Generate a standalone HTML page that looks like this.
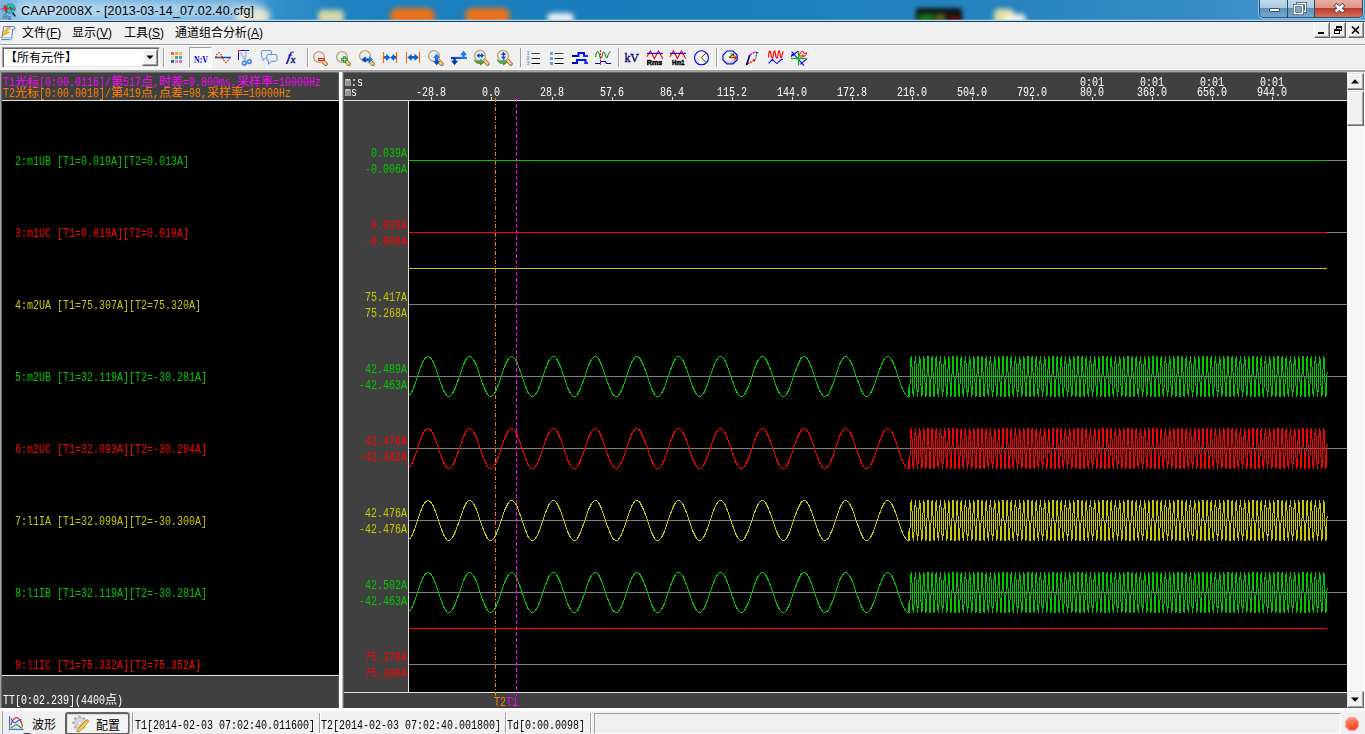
<!DOCTYPE html>
<html lang="zh-CN"><head><meta charset="utf-8"><title>CAAP2008X - [2013-03-14_07.02.40.cfg]</title>
<style>
html,body{margin:0;padding:0;}
body{width:1365px;height:734px;overflow:hidden;position:relative;background:#f0f0f0;font-family:"Liberation Sans","Noto Sans CJK SC",sans-serif;font-size:12px;}
div,span,svg{box-sizing:border-box;}
.a{position:absolute;}
.t{position:absolute;white-space:pre;font:12px/12px "Liberation Mono","Noto Sans CJK SC",monospace;height:12px;}
.t b{display:inline-block;font-weight:normal;transform:scaleX(.83334);transform-origin:0 50%;white-space:pre;}
.t i{font-style:normal;display:inline-block;width:auto;font-size:12px;}
.ui{position:absolute;white-space:pre;font:12px/16px "Liberation Sans","Noto Sans CJK SC",sans-serif;color:#000;}

</style></head>
<body>
<div class="a" id="titlebar" style="left:0;top:0;width:1365px;height:22px;overflow:hidden;background:linear-gradient(90deg,#7cb8e2 0px,#5ba6d9 120px,#3a92cc 260px,#1f82c0 340px,#187dba 600px,#1f81bd 850px,#2883bf 1020px,#378cc6 1200px,#4a98d0 1365px);">
<div class="a" style="left:14px;top:1px;width:250px;height:19px;background:#ffffff;border-radius:10px;filter:blur(6px);opacity:0.55"></div>
<div class="a" style="left:236px;top:9px;width:34px;height:16px;background:#f4efd6;border-radius:8px;filter:blur(3px);opacity:0.9"></div>
<div class="a" style="left:318px;top:10px;width:26px;height:14px;background:#e9e2a4;border-radius:5px;filter:blur(2.5px);opacity:0.9"></div>
<div class="a" style="left:390px;top:8px;width:45px;height:16px;background:#e8721c;border-radius:8px;filter:blur(2.5px);opacity:1"></div>
<div class="a" style="left:465px;top:8px;width:45px;height:16px;background:#e8721c;border-radius:8px;filter:blur(2.5px);opacity:1"></div>
<div class="a" style="left:547px;top:13px;width:27px;height:10px;background:#f4f4f4;border-radius:5px;filter:blur(2.5px);opacity:0.95"></div>
<div class="a" style="left:916px;top:8px;width:46px;height:16px;background:#0a1210;border-radius:3px;filter:blur(2.2px);opacity:0.97"></div>
<div class="a" style="left:918px;top:14px;width:16px;height:9px;background:#1c8a18;border-radius:3px;filter:blur(2.5px);opacity:0.85"></div>
<div class="a" style="left:934px;top:14px;width:12px;height:9px;background:#6a7414;border-radius:3px;filter:blur(2.5px);opacity:0.8"></div>
<div class="a" style="left:948px;top:15px;width:13px;height:8px;background:#6a0c0c;border-radius:3px;filter:blur(2.5px);opacity:0.85"></div>
<div class="a" style="left:994px;top:9px;width:20px;height:16px;background:#ece6a0;border-radius:5px;filter:blur(2.5px);opacity:0.95"></div>
<div class="a" style="left:1004px;top:14px;width:22px;height:10px;background:#f4f2e8;border-radius:5px;filter:blur(2.5px);opacity:0.95"></div>
<div class="a" style="left:0;top:19px;width:1365px;height:1px;background:rgba(190,225,245,.25)"></div>
<div class="a" style="left:0;top:20px;width:1365px;height:1px;background:#b4daf0"></div>
<div class="a" style="left:0;top:21px;width:1365px;height:1px;background:#1d405e"></div>
</div>
<div class="a" id="title" style="left:21px;top:3px;height:16px;font:12.5px/16px 'Liberation Sans',sans-serif;color:#000;white-space:pre;letter-spacing:0.14px">CAAP2008X - [2013-03-14_07.02.40.cfg]</div>
<div class="a" style="left:1259px;top:-1px;width:104px;height:19px;border:1px solid #2a4a66;border-top:none;border-radius:0 0 5px 5px;overflow:hidden;box-shadow:0 0 0 1px rgba(255,255,255,.45)">
<div class="a" style="left:0;top:0;width:28px;height:18px;background:linear-gradient(#c4dcee 0,#a8cbe4 48%,#5c93ba 52%,#76a8cb 100%);border-right:1px solid #2a4a66"></div>
<div class="a" style="left:28px;top:0;width:27px;height:18px;background:linear-gradient(#c4dcee 0,#a8cbe4 48%,#5c93ba 52%,#76a8cb 100%);border-right:1px solid #2a4a66"></div>
<div class="a" style="left:55px;top:0;width:48px;height:18px;background:linear-gradient(#e8b0a6 0,#dc9486 48%,#bf3a26 52%,#d0705c 100%)"></div>
</div>
<svg class="a" style="left:1259px;top:0" width="104" height="19" viewBox="0 0 104 19"><rect x="10.5" y="8.5" width="10" height="3" fill="#fff" stroke="#3d4f63" stroke-width="1" rx="0.5"/><rect x="38.5" y="3.5" width="8" height="8" fill="none" stroke="#3d4f63" stroke-width="3"/><rect x="38.5" y="3.5" width="8" height="8" fill="none" stroke="#fff" stroke-width="1.4"/><rect x="35.5" y="5.5" width="8" height="8" fill="#7aa8cb" stroke="#3d4f63" stroke-width="3"/><rect x="35.5" y="5.5" width="8" height="8" fill="none" stroke="#fff" stroke-width="1.6"/><path d="M76 4.4 L85 12 M85 4.4 L76 12" stroke="#4a4a5a" stroke-width="4.2" stroke-linecap="butt"/><path d="M76.7 5 L84.3 11.4 M84.3 5 L76.7 11.4" stroke="#fff" stroke-width="2.6" stroke-linecap="butt"/></svg>
<div class="a" style="left:0;top:22px;width:1365px;height:22px;background:#f0f0f0"></div>
<div class="ui mn" style="left:22px;top:25px">文件(<u>F</u>)</div>
<div class="ui mn" style="left:72px;top:25px">显示(<u>V</u>)</div>
<div class="ui mn" style="left:124px;top:25px">工具(<u>S</u>)</div>
<div class="ui mn" style="left:175px;top:25px">通道组合分析(<u>A</u>)</div>
<div class="a" style="left:1314px;top:22px;width:16px;height:16px;background:#f0f0f0;border:1px solid;border-color:#fff #696969 #696969 #fff;box-shadow:inset -1px -1px 0 #a0a0a0"></div>
<div class="a" style="left:1330px;top:22px;width:16px;height:16px;background:#f0f0f0;border:1px solid;border-color:#fff #696969 #696969 #fff;box-shadow:inset -1px -1px 0 #a0a0a0"></div>
<div class="a" style="left:1348px;top:22px;width:16px;height:16px;background:#f0f0f0;border:1px solid;border-color:#fff #696969 #696969 #fff;box-shadow:inset -1px -1px 0 #a0a0a0"></div>
<svg class="a" style="left:1314px;top:23px" width="50" height="14" viewBox="0 0 50 14" shape-rendering="crispEdges"><rect x="4" y="9" width="6" height="2" fill="#000"/><rect x="22.5" y="3.5" width="5" height="4" fill="none" stroke="#000"/><rect x="22" y="3" width="6" height="2" fill="#000"/><rect x="20.5" y="6.5" width="5" height="4" fill="#f0f0f0" stroke="#000"/><rect x="20" y="6" width="6" height="2" fill="#000"/><path d="M38 3.5 L45 10.5 M45 3.5 L38 10.5" stroke="#000" stroke-width="1.6" shape-rendering="auto"/></svg>
<div class="a" style="left:0;top:44px;width:1365px;height:1px;background:#a0a0a0"></div>
<div class="a" style="left:0;top:45px;width:1365px;height:1px;background:#ffffff"></div>
<div class="a" style="left:2px;top:47px;width:158px;height:21px;background:#fff;border:1px solid;border-color:#a0a0a0 #fff #fff #a0a0a0;box-shadow:inset 1px 1px 0 #696969, inset -1px -1px 0 #e3e3e3"></div>
<div class="ui" style="left:5px;top:50px;font-family:'Liberation Sans','Noto Sans CJK SC',sans-serif;">【所有元件】</div>
<div class="a" style="left:142px;top:49px;width:16px;height:17px;background:#f0f0f0;border:1px solid;border-color:#fff #696969 #696969 #fff;box-shadow:inset -1px -1px 0 #a0a0a0, inset 1px 1px 0 #f8f8f8"></div>
<svg class="a" style="left:146px;top:55px" width="8" height="5" viewBox="0 0 8 5"><path d="M0.5 0.5 L7.5 0.5 L4 4.2 Z" fill="#000"/></svg>
<div class="a" style="left:163px;top:48px;width:1px;height:19px;background:#a0a0a0"></div>
<div class="a" style="left:164px;top:48px;width:1px;height:19px;background:#fff"></div>
<div class="a" style="left:307px;top:48px;width:1px;height:19px;background:#a0a0a0"></div>
<div class="a" style="left:308px;top:48px;width:1px;height:19px;background:#fff"></div>
<div class="a" style="left:520px;top:48px;width:1px;height:19px;background:#a0a0a0"></div>
<div class="a" style="left:521px;top:48px;width:1px;height:19px;background:#fff"></div>
<div class="a" style="left:618px;top:48px;width:1px;height:19px;background:#a0a0a0"></div>
<div class="a" style="left:619px;top:48px;width:1px;height:19px;background:#fff"></div>
<div class="a" style="left:716px;top:48px;width:1px;height:19px;background:#a0a0a0"></div>
<div class="a" style="left:717px;top:48px;width:1px;height:19px;background:#fff"></div>
<div class="a" style="left:189px;top:47px;width:23px;height:21px;background:#f8f8f8;border:1px solid;border-color:#a0a0a0 #fff #fff #a0a0a0"></div>
<div class="a" style="left:0;top:69px;width:1365px;height:1px;background:#fbfbfb"></div>
<svg class="a" style="left:0;top:0" width="1365" height="72" viewBox="0 0 1365 72" fill="none"><defs><linearGradient id="gb" x1="0" y1="0" x2="1" y2="0"><stop offset="0" stop-color="#0038b0"/><stop offset="1" stop-color="#2a8cf4"/></linearGradient><linearGradient id="gbv" x1="0" y1="0" x2="0" y2="1"><stop offset="0" stop-color="#2a8cf4"/><stop offset="1" stop-color="#0038b0"/></linearGradient><linearGradient id="gg" x1="0" y1="0" x2="0" y2="1"><stop offset="0" stop-color="#8cc878"/><stop offset="1" stop-color="#2c7c2c"/></linearGradient><radialGradient id="sph" cx="0.35" cy="0.3" r="0.8"><stop offset="0" stop-color="#ffffff"/><stop offset="0.6" stop-color="#e8e8e8"/><stop offset="1" stop-color="#909090"/></radialGradient></defs><rect x="171" y="52" width="3" height="3" fill="#f85c5c"/><rect x="175" y="52" width="3" height="3" fill="#fb9c5c"/><rect x="179" y="52" width="3" height="3" fill="#f0c444"/><rect x="171" y="56" width="3" height="3" fill="#c8e8a4"/><rect x="175" y="56" width="3" height="3" fill="#34b854"/><rect x="179" y="56" width="3" height="3" fill="#4ca4e8"/><rect x="171" y="60" width="3" height="3" fill="#4464a4"/><rect x="175" y="60" width="3" height="3" fill="#d094d8"/><rect x="179" y="60" width="3" height="3" fill="#f864a8"/><text x="201" y="63" font-family="Liberation Serif,serif" font-weight="bold" font-size="10.6" fill="#0000e8" text-anchor="middle" textLength="14" lengthAdjust="spacingAndGlyphs">N:V</text><path d="M215 57.5H231" stroke="#1464c0" stroke-width="1.6"/><circle cx="216" cy="56.5" r="0.85" fill="#e83410"/><circle cx="216.9" cy="54.5" r="0.85" fill="#e83410"/><circle cx="219" cy="52.6" r="0.85" fill="#e83410"/><circle cx="221.1" cy="54.5" r="0.85" fill="#e83410"/><circle cx="221.9" cy="56.5" r="0.85" fill="#e83410"/><circle cx="222.9" cy="58.5" r="0.85" fill="#e83410"/><circle cx="224" cy="60.5" r="0.85" fill="#e83410"/><circle cx="226" cy="62.3" r="0.85" fill="#e83410"/><circle cx="228" cy="60.5" r="0.85" fill="#e83410"/><circle cx="229" cy="58.5" r="0.85" fill="#e83410"/><path d="M238.5 53V60" stroke="#0000ff" stroke-width="1"/><path d="M241 50.5H249" stroke="#0000ff"/><path d="M238.5 53V50.5H241" stroke="#ff0000"/><path d="M240.3 52 L245.8 61.5 M246.2 50.5 L245.2 61.5" stroke="#9cc0e0" stroke-width="1.6"/><circle cx="244.3" cy="63.2" r="1.9" stroke="#3c8cd8" stroke-width="1.5" fill="#cfe4f6"/><circle cx="249.3" cy="61.6" r="1.9" stroke="#3c8cd8" stroke-width="1.5" fill="#cfe4f6"/><path d="M263 50.5h7a1.6 1.6 0 0 1 1.6 1.6v4.4a1.6 1.6 0 0 1 -1.6 1.6h-4.6l-2.4 2.6v-2.6a1.6 1.6 0 0 1 -1.6 -1.6v-4.4a1.6 1.6 0 0 1 1.6 -1.6z" fill="#e6eef8" stroke="#6c9ccc" stroke-width="1"/><path d="M268.4 54.5h7a1.6 1.6 0 0 1 1.6 1.6v3.6a1.6 1.6 0 0 1 -1.6 1.6h-4.2l-2.7 3.2v-3.2a1.6 1.6 0 0 1 -1.6 -1.6v-3.6a1.6 1.6 0 0 1 1.5 -1.6z" fill="#e6eef8" stroke="#5c90c4" stroke-width="1"/><text x="0" y="0" transform="translate(286.2 61.4) skewX(-12)" font-family="Liberation Serif,serif" font-style="italic" font-weight="bold" font-size="13.5" fill="#1018b0">f</text><text x="290.8" y="62.6" font-family="Liberation Serif,serif" font-style="italic" font-weight="bold" font-size="9.5" fill="#101890" stroke="#101890" stroke-width="0.3">x</text><path d="M323.6 61.8 L325.8 64" stroke="#a86428" stroke-width="4" stroke-linecap="round"/><path d="M323.4 61.6 L325.6 63.8" stroke="#ecd094" stroke-width="2.4" stroke-linecap="round"/><circle cx="319" cy="57" r="5.4" fill="#e4ecf4" stroke="#c8a060" stroke-width="1.3"/><rect x="318" y="58" width="7" height="3" fill="#e82434"/><rect x="319.3" y="59" width="4.4" height="1" fill="#ffc8c8"/><path d="M346.6 61.8 L348.8 64" stroke="#a86428" stroke-width="4" stroke-linecap="round"/><path d="M346.4 61.6 L348.6 63.8" stroke="#ecd094" stroke-width="2.4" stroke-linecap="round"/><circle cx="342" cy="57" r="5.4" fill="#e4ecf4" stroke="#c8a060" stroke-width="1.3"/><path d="M344.5 56.2V62.8M341.2 59.5H347.8" stroke="#308c30" stroke-width="3"/><path d="M344.5 57.2V61.8M342.2 59.5H346.8" stroke="#a4dc94" stroke-width="1"/><path d="M369.6 60.8 L372.8 64" stroke="#a86428" stroke-width="4" stroke-linecap="round"/><path d="M369.4 60.6 L372.6 63.8" stroke="#ecd094" stroke-width="2.4" stroke-linecap="round"/><circle cx="365" cy="56" r="5.4" fill="#e4ecf4" stroke="#c8a060" stroke-width="1.3"/><path d="M361.6 59.6 L365.8 56.2 L365.8 58.2 L369 58.2 L369 56.2 L373.2 59.6 L369 63 L369 61 L365.8 61 L365.8 63 Z" fill="url(#gb)"/><path d="M383.5 52V63M396.5 52V63" stroke="#f86c08" stroke-width="1.2"/><path d="M384.2 56 H386.2 V53.8 L390.2 57.4 L386.2 61 V58.8 H384.2 Z" fill="#0c60d0"/><path d="M396 56 H394.2 V53.8 L390.2 57.4 L394.2 61 V58.8 H396 Z" fill="#0c60d0"/><path d="M406.5 52V63M419.5 52V63" stroke="#f86c08" stroke-width="1.2"/><path d="M407.4 57.4 L411.6 53.8 L411.6 56 L414.6 56 L414.6 53.8 L418.8 57.4 L414.6 61 L414.6 58.8 L411.6 58.8 L411.6 61 Z" fill="#0c60d0"/><path d="M438.6 60.8 L441.8 64" stroke="#a86428" stroke-width="4" stroke-linecap="round"/><path d="M438.4 60.6 L441.6 63.8" stroke="#ecd094" stroke-width="2.4" stroke-linecap="round"/><circle cx="434" cy="56" r="5.4" fill="#e4ecf4" stroke="#c8a060" stroke-width="1.3"/><path d="M436.6 53.6 L440 57.8 L438 57.8 L438 61 L440 61 L436.6 65.2 L433.2 61 L435.2 61 L435.2 57.8 L433.2 57.8 Z" fill="url(#gbv)"/><rect x="451" y="56.9" width="16" height="2.2" fill="url(#gb)"/><path d="M463.6 50.8 L467.2 55.2 H464.8 V58 H462.4 V55.2 H460 Z" fill="#1c74e8"/><path d="M454.6 65.2 L451 60.8 H453.4 V58 H455.8 V60.8 H458.2 Z" fill="#0438a8"/><path d="M484.6 60.6 L487.8 63.8" stroke="#a86428" stroke-width="4" stroke-linecap="round"/><path d="M484.4 60.4 L487.6 63.6" stroke="#ecd094" stroke-width="2.4" stroke-linecap="round"/><circle cx="480" cy="55.8" r="5.4" fill="#e4ecf4" stroke="#c8a060" stroke-width="1.3"/><path d="M476.4 55.6 L479.4 53 L479.4 54.8 L481.2 54.8 L481.2 53 L484.2 55.6 L481.2 58.2 L481.2 56.4 L479.4 56.4 L479.4 58.2 Z" fill="#0c50c8"/><path d="M474 59.6 c2 1.6 4.5 1.8 6.4 1.2 v-1.8 l4 3 l-4 3.2 v-1.8 c-3 0.6 -5.4 -0.6 -6.4 -3.8z" fill="url(#gg)" stroke="#2c7c2c" stroke-width="0.5"/><path d="M507.6 60.6 L510.8 63.8" stroke="#a86428" stroke-width="4" stroke-linecap="round"/><path d="M507.4 60.4 L510.6 63.6" stroke="#ecd094" stroke-width="2.4" stroke-linecap="round"/><circle cx="503" cy="55.8" r="5.4" fill="#e4ecf4" stroke="#c8a060" stroke-width="1.3"/><path d="M503.5 51.8 L506.1 54.8 L504.3 54.8 L504.3 56.8 L506.1 56.8 L503.5 59.8 L500.9 56.8 L502.7 56.8 L502.7 54.8 L500.9 54.8 Z" fill="#0c50c8"/><path d="M497 59.6 c2 1.6 4.5 1.8 6.4 1.2 v-1.8 l4 3 l-4 3.2 v-1.8 c-3 0.6 -5.4 -0.6 -6.4 -3.8z" fill="url(#gg)" stroke="#2c7c2c" stroke-width="0.5"/><text x="526.6" y="55.2" font-family="Liberation Sans,sans-serif" font-weight="bold" font-size="5.6" fill="#6c9ce0">1</text><text x="526.6" y="60.2" font-family="Liberation Sans,sans-serif" font-weight="bold" font-size="5.6" fill="#6c9ce0">2</text><text x="526.6" y="65.2" font-family="Liberation Sans,sans-serif" font-weight="bold" font-size="5.6" fill="#6c9ce0">3</text><path d="M531.5 53.5H540" stroke="#484848"/><path d="M531.5 58.5H540" stroke="#282828"/><path d="M531.5 63.5H540" stroke="#000"/><rect x="550" y="52" width="3" height="3" fill="#6ca0e8"/><rect x="550" y="57" width="3" height="3" fill="#6ca0e8"/><rect x="550" y="62" width="3" height="3" fill="#6ca0e8"/><path d="M554.5 53.5H563.5" stroke="#484848"/><path d="M554.5 58.5H563.5" stroke="#282828"/><path d="M554.5 63.5H563.5" stroke="#000"/><path d="M572 56H578.5" stroke="#0000c8" stroke-width="2"/><path d="M578.5 57V53H584V57" stroke="#0010f0" stroke-width="2"/><path d="M583 56H588" stroke="#1030ff" stroke-width="2"/><path d="M572 63H577" stroke="#0000b0" stroke-width="2"/><path d="M577 64V60H585.5V64" stroke="#0010f0" stroke-width="2"/><path d="M584.5 63H588" stroke="#1030ff" stroke-width="2"/><path d="M595.8 57 C595.8 51,598.6 50,599.2 54 S601.4 60.5,602.2 56 S603.6 51,604.6 53 S606.4 60.5,607.4 57 S609.4 52,610.8 51.6" stroke="#007000" stroke-width="0.95"/><path d="M595 63.5H600.5V61.5H606V63.5H611" stroke="#0000ff" stroke-width="1"/><path d="M600.5 50V66" stroke="#ff0000" stroke-width="1" stroke-dasharray="2 1.2"/><text x="624.4" y="62" font-family="Liberation Serif,serif" font-size="13" fill="#000078" stroke="#000078" stroke-width="0.35" textLength="14.6" lengthAdjust="spacingAndGlyphs">kV</text><path d="M647 56.8 L650.4 51 L654.4 58.6 L658.4 51 L662.8 58.8" stroke="#ff0000" stroke-width="1.1"/><path d="M647 53.4H663" stroke="#0000ff" stroke-width="1.1"/><text x="646.8" y="64.6" font-family="Liberation Sans,sans-serif" font-weight="bold" font-size="7.6" fill="#000" stroke="#000" stroke-width="0.45" textLength="15.4" lengthAdjust="spacingAndGlyphs">Rms</text><path d="M670 56.8 L673.4 51 L677.4 58.6 L681.4 51 L685.8 58.8" stroke="#ff0000" stroke-width="1.1"/><path d="M670 53.4H686" stroke="#0000ff" stroke-width="1.1"/><text x="672" y="64.6" font-family="Liberation Sans,sans-serif" font-weight="bold" font-size="7.6" fill="#000" stroke="#000" stroke-width="0.45" textLength="12.6" lengthAdjust="spacingAndGlyphs">Hm1</text><circle cx="701.5" cy="57.8" r="7" stroke="#0000ff" stroke-width="1.1"/><path d="M701.4 57.6 L706 53" stroke="#e00000" stroke-width="1"/><path d="M701.4 57.6 L706 62.4" stroke="#008000" stroke-width="1"/><path d="M727 51 H733 L737.2 55 V60 L733 64 H727 L723 60 V55 Z" fill="url(#sph)" stroke="#0000e8" stroke-width="1.1"/><path d="M729 57.6H736" stroke="#ff0000" stroke-width="1.1"/><path d="M734.2 55.8 L736.6 57.6 L734.2 59.4" stroke="#ff0000" stroke-width="1"/><path d="M729 57.4 L733 54.4" stroke="#008000" stroke-width="1.2"/><path d="M730.6 54 H733.4 V56.6" stroke="#008000" stroke-width="1.1"/><path d="M746.8 64.2 L749.8 55" stroke="#000060" stroke-width="1.6"/><circle cx="746.8" cy="64.2" r="1" fill="#000"/><path d="M749.8 54.6 L756.4 51.4" stroke="#ff00ff" stroke-width="1.5" stroke-dasharray="2.4 0.8"/><path d="M757 52 L755.6 58.6" stroke="#008000" stroke-width="1.2" stroke-dasharray="2 0.8"/><path d="M755.6 52.6H758.4" stroke="#008000" stroke-width="1"/><path d="M747.6 63.8 L755.2 59.6" stroke="#ff0000" stroke-width="1.2" stroke-dasharray="2 0.8"/><path d="M752.6 59 L755.6 59.4 L754.4 62" fill="#ff0000"/><path d="M768.6 57.4 C768.6 50,770.4 49.6,770.9 54 S772.6 60.4,773.3 55 S774.8 49.6,775.4 54 S777.2 60.4,777.9 55 S779.4 49.6,780 54 S781.4 59,782 55 L783 51.4" stroke="#ff0000" stroke-width="1.15"/><path d="M768.6 63.4 L772.2 59.4 L777 63.6 L781.6 59.4 H783" stroke="#0000ff" stroke-width="1.1"/><path d="M791.6 51.6 L804 65.6" stroke="#0000ff" stroke-width="1.1"/><path d="M791 56.6 L798 51.2" stroke="#0000ff" stroke-width="1.1"/><path d="M807 58.6 L800.4 64.4" stroke="#0000ff" stroke-width="1.1"/><rect x="791.4" y="54" width="2" height="2" fill="#0000c0"/><path d="M791 58.5H806.4" stroke="#00c000" stroke-width="1.3"/><path d="M798.6 51V65.6" stroke="#00c000" stroke-width="1.3"/><path d="M800 56.6 C799 53,801 52,802.6 51 L804.6 54 L806.6 52.6 C807 55,804 57.4,800.4 57 M801.6 55.4H804" stroke="#ff0000" stroke-width="1"/></svg>
<svg class="a" style="left:0;top:2px" width="18" height="18" viewBox="0 0 18 18" fill="none"><path d="M12.6 10.6 L15.2 14.4" stroke="#101018" stroke-width="1.4"/><circle cx="10.4" cy="6.6" r="4.7" fill="#10d8d0" stroke="#2c6c78" stroke-width="0.9"/><path d="M0.6 7 H4 L5 3 L5.8 10.4 L6.8 5 L7.6 7.4 L9 6.8 L10 4.6 L11 8.6 L12 5.4 L13 7.4 L15.6 7" stroke="#d01818" stroke-width="0.9"/><path d="M2.6 4.4 L7.6 9.6 M7.8 4 L2.8 9.8" stroke="#b02020" stroke-width="0.7" opacity="0.8"/><path d="M7.4 10.6 L3.6 13.6" stroke="#404c70" stroke-width="0.9"/><text x="1.2" y="16.6" font-family="Liberation Sans,sans-serif" font-size="6" fill="#283c78">.cfg</text></svg>
<svg class="a" style="left:0;top:24px" width="18" height="18" viewBox="0 0 18 18" fill="none"><path d="M3.6 2.6 H13.6 C15.4 2.6,15.6 4.4,14.2 5 H12.8 L11.6 14.6 C11.4 15.8,10.4 15.8,9.6 15.6 H1.6 C1.2 15,1.6 14.4,2 14 Z" fill="#eef4fc" stroke="#4c84cc" stroke-width="1"/><path d="M3 13.8H10.6" stroke="#7cacdc" stroke-width="1"/><path d="M7.6 3.4 L2.2 8.8 L5.2 9 L0.2 13.6 L9.6 8.2 L6.4 7.8 L10.6 3.8 Z" fill="#f4c020" stroke="#e09810" stroke-width="0.6"/></svg>
<div class="a" style="left:0;top:70px;width:1365px;height:1px;background:#a0a0a0"></div>
<div class="a" style="left:0;top:71px;width:1365px;height:1px;background:#a0a0a0"></div>
<div class="a" style="left:1px;top:72px;width:1346px;height:1px;background:#696969"></div>
<div class="a" style="left:0;top:72px;width:1px;height:636px;background:#a0a0a0"></div>
<div class="a" style="left:1px;top:72px;width:1px;height:636px;background:#696969"></div>
<div class="a" style="left:2px;top:73px;width:337px;height:635px;background:#404040"></div>
<div class="a" style="left:2px;top:101px;width:337px;height:574px;background:#000"></div>
<div class="a" style="left:2px;top:100px;width:337px;height:1px;background:#e4e4e4"></div>
<div class="a" style="left:2px;top:675px;width:337px;height:1px;background:#e4e4e4"></div>
<div class="a" style="left:338px;top:73px;width:1px;height:27px;background:#585858"></div>
<div class="a" style="left:338px;top:676px;width:1px;height:32px;background:#585858"></div>
<div class="a" style="left:339px;top:72px;width:3px;height:636px;background:#ffffff"></div>
<div class="a" style="left:342px;top:72px;width:1px;height:636px;background:#b4b4b4"></div>
<div class="a" style="left:343px;top:72px;width:1px;height:636px;background:#6c6c6c"></div>
<div class="a" style="left:344px;top:73px;width:1003px;height:635px;background:#404040"></div>
<div class="a" style="left:409px;top:101px;width:938px;height:591px;background:#000"></div>
<div class="t" style="left:3px;top:77px;color:#ff00ff;"><b style="width:12px">T1</b><i>光标</i><b style="width:72px">[0:00.0116]/</b><i>第</i><b style="width:18px">517</b><i>点</i><b style="width:6px">,</b><i>时差</i><b style="width:54px">=9.800ms,</b><i>采样率</i><b style="width:48px">=10000Hz</b></div>
<div class="t" style="left:3px;top:88px;color:#ff8000;"><b style="width:12px">T2</b><i>光标</i><b style="width:72px">[0:00.0018]/</b><i>第</i><b style="width:18px">419</b><i>点</i><b style="width:6px">,</b><i>点差</i><b style="width:24px">=98,</b><i>采样率</i><b style="width:48px">=10000Hz</b></div>
<div class="t" style="left:15px;top:156px;color:#00c800;"><b style="width:174px">2:m1UB [T1=0.019A][T2=0.013A]</b></div>
<div class="t" style="left:371px;top:148px;color:#00c800;"><b style="width:36px">0.039A</b></div>
<div class="t" style="left:365px;top:164px;color:#00c800;"><b style="width:42px">-0.006A</b></div>
<div class="t" style="left:15px;top:228px;color:#ff0000;"><b style="width:174px">3:m1UC [T1=0.019A][T2=0.019A]</b></div>
<div class="t" style="left:371px;top:220px;color:#ff0000;"><b style="width:36px">0.039A</b></div>
<div class="t" style="left:365px;top:236px;color:#ff0000;"><b style="width:42px">-0.006A</b></div>
<div class="t" style="left:15px;top:300px;color:#c8c800;"><b style="width:186px">4:m2UA [T1=75.307A][T2=75.320A]</b></div>
<div class="t" style="left:365px;top:292px;color:#c8c800;"><b style="width:42px">75.417A</b></div>
<div class="t" style="left:365px;top:308px;color:#c8c800;"><b style="width:42px">75.268A</b></div>
<div class="t" style="left:15px;top:372px;color:#00c800;"><b style="width:192px">5:m2UB [T1=32.119A][T2=-30.281A]</b></div>
<div class="t" style="left:365px;top:364px;color:#00c800;"><b style="width:42px">42.489A</b></div>
<div class="t" style="left:359px;top:380px;color:#00c800;"><b style="width:48px">-42.463A</b></div>
<div class="t" style="left:15px;top:444px;color:#ff0000;"><b style="width:192px">6:m2UC [T1=32.093A][T2=-30.294A]</b></div>
<div class="t" style="left:365px;top:436px;color:#ff0000;"><b style="width:42px">42.476A</b></div>
<div class="t" style="left:359px;top:452px;color:#ff0000;"><b style="width:48px">-42.482A</b></div>
<div class="t" style="left:15px;top:516px;color:#c8c800;"><b style="width:192px">7:l1IA [T1=32.099A][T2=-30.300A]</b></div>
<div class="t" style="left:365px;top:508px;color:#c8c800;"><b style="width:42px">42.476A</b></div>
<div class="t" style="left:359px;top:524px;color:#c8c800;"><b style="width:48px">-42.476A</b></div>
<div class="t" style="left:15px;top:588px;color:#00c800;"><b style="width:192px">8:l1IB [T1=32.119A][T2=-30.281A]</b></div>
<div class="t" style="left:365px;top:580px;color:#00c800;"><b style="width:42px">42.502A</b></div>
<div class="t" style="left:359px;top:596px;color:#00c800;"><b style="width:48px">-42.463A</b></div>
<div class="t" style="left:15px;top:660px;color:#ff0000;"><b style="width:186px">9:l1IC [T1=75.332A][T2=75.352A]</b></div>
<div class="t" style="left:365px;top:652px;color:#ff0000;"><b style="width:42px">75.378A</b></div>
<div class="t" style="left:365px;top:668px;color:#ff0000;"><b style="width:42px">75.300A</b></div>
<div class="t" style="left:3px;top:695px;color:#ffffff;"><b style="width:102px">TT[0:02.239](4400</b><i>点</i><b style="width:6px">)</b></div>
<div class="t" style="left:345px;top:77px;color:#ffffff;"><b style="width:18px">m:s</b></div>
<div class="t" style="left:345px;top:87px;color:#ffffff;"><b style="width:12px">ms</b></div>
<div class="t" style="left:416px;top:87px;color:#ffffff;"><b style="width:30px">-28.8</b></div>
<div class="t" style="left:482px;top:87px;color:#ffffff;"><b style="width:18px">0.0</b></div>
<div class="t" style="left:540px;top:87px;color:#ffffff;"><b style="width:24px">28.8</b></div>
<div class="t" style="left:600px;top:87px;color:#ffffff;"><b style="width:24px">57.6</b></div>
<div class="t" style="left:660px;top:87px;color:#ffffff;"><b style="width:24px">86.4</b></div>
<div class="t" style="left:717px;top:87px;color:#ffffff;"><b style="width:30px">115.2</b></div>
<div class="t" style="left:777px;top:87px;color:#ffffff;"><b style="width:30px">144.0</b></div>
<div class="t" style="left:837px;top:87px;color:#ffffff;"><b style="width:30px">172.8</b></div>
<div class="t" style="left:897px;top:87px;color:#ffffff;"><b style="width:30px">216.0</b></div>
<div class="t" style="left:957px;top:87px;color:#ffffff;"><b style="width:30px">504.0</b></div>
<div class="t" style="left:1017px;top:87px;color:#ffffff;"><b style="width:30px">792.0</b></div>
<div class="t" style="left:1080px;top:87px;color:#ffffff;"><b style="width:24px">80.0</b></div>
<div class="t" style="left:1080px;top:77px;color:#ffffff;"><b style="width:24px">0:01</b></div>
<div class="t" style="left:1137px;top:87px;color:#ffffff;"><b style="width:30px">368.0</b></div>
<div class="t" style="left:1140px;top:77px;color:#ffffff;"><b style="width:24px">0:01</b></div>
<div class="t" style="left:1197px;top:87px;color:#ffffff;"><b style="width:30px">656.0</b></div>
<div class="t" style="left:1200px;top:77px;color:#ffffff;"><b style="width:24px">0:01</b></div>
<div class="t" style="left:1257px;top:87px;color:#ffffff;"><b style="width:30px">944.0</b></div>
<div class="t" style="left:1260px;top:77px;color:#ffffff;"><b style="width:24px">0:01</b></div>
<div class="t" style="left:494px;top:697px;color:#ff8000;"><b style="width:12px">T2</b></div>
<div class="t" style="left:506px;top:697px;color:#ff00ff;"><b style="width:12px">T1</b></div>
<svg class="a" style="left:0;top:0" width="1365" height="734" viewBox="0 0 1365 734" shape-rendering="crispEdges" fill="none" stroke-width="1"><path d="M344 100.5H1347 M344 692.5H1347 M408.5 100V692" stroke="#e4e4e4"/><path d="M431.5 97V100 M491.5 97V100 M552.5 97V100 M612.5 97V100 M672.5 97V100 M732.5 97V100 M792.5 97V100 M852.5 97V100 M912.5 97V100 M972.5 97V100 M1032.5 97V100 M1092.5 97V100 M1152.5 97V100 M1212.5 97V100 M1272.5 97V100 " stroke="#e4e4e4"/><path d="M409 160.5 H1347 M409 232.5 H1347 M409 304.5 H1347 M409 376.5 H1347 M409 448.5 H1347 M409 520.5 H1347 M409 592.5 H1347 M409 664.5 H1347 " stroke="#808080"/><path d="M409 160.5 H1327" stroke="#00c800"/><path d="M409 232.5 H1327" stroke="#ff0000"/><path d="M409 268.5 H1327" stroke="#c8c800"/><path d="M409 628.5 H1327" stroke="#ff0000"/><path d="M409.5 395.5 L410.5 393.5 L411.5 392.5 L412.5 390.5 L413.5 387.5 L414.5 385.5 L415.5 382.5 L416.5 379.5 L417.5 376.5 L418.5 373.5 L419.5 370.5 L420.5 367.5 L421.5 365.5 L422.5 362.5 L423.5 360.5 L424.5 359.5 L425.5 357.5 L426.5 357.5 L427.5 356.5 L428.5 356.5 L429.5 357.5 L430.5 357.5 L431.5 359.5 L432.5 360.5 L433.5 362.5 L434.5 365.5 L435.5 367.5 L436.5 370.5 L437.5 373.5 L438.5 376.5 L439.5 379.5 L440.5 382.5 L441.5 385.5 L442.5 387.5 L443.5 390.5 L444.5 392.5 L445.5 393.5 L446.5 395.5 L447.5 396.5 L448.5 396.5 L449.5 396.5 L450.5 395.5 L451.5 394.5 L452.5 393.5 L453.5 391.5 L454.5 389.5 L455.5 387.5 L456.5 384.5 L457.5 381.5 L458.5 379.5 L459.5 376.5 L460.5 373.5 L461.5 370.5 L462.5 367.5 L463.5 364.5 L464.5 362.5 L465.5 360.5 L466.5 358.5 L467.5 357.5 L468.5 356.5 L469.5 356.5 L470.5 356.5 L471.5 357.5 L472.5 358.5 L473.5 359.5 L474.5 361.5 L475.5 363.5 L476.5 365.5 L477.5 368.5 L478.5 371.5 L479.5 374.5 L480.5 377.5 L481.5 380.5 L482.5 383.5 L483.5 385.5 L484.5 388.5 L485.5 390.5 L486.5 392.5 L487.5 394.5 L488.5 395.5 L489.5 396.5 L490.5 396.5 L491.5 396.5 L492.5 395.5 L493.5 394.5 L494.5 393.5 L495.5 391.5 L496.5 389.5 L497.5 386.5 L498.5 384.5 L499.5 381.5 L500.5 378.5 L501.5 375.5 L502.5 372.5 L503.5 369.5 L504.5 366.5 L505.5 364.5 L506.5 362.5 L507.5 360.5 L508.5 358.5 L509.5 357.5 L510.5 356.5 L511.5 356.5 L512.5 356.5 L513.5 357.5 L514.5 358.5 L515.5 359.5 L516.5 361.5 L517.5 363.5 L518.5 366.5 L519.5 369.5 L520.5 371.5 L521.5 374.5 L522.5 377.5 L523.5 380.5 L524.5 383.5 L525.5 386.5 L526.5 388.5 L527.5 391.5 L528.5 393.5 L529.5 394.5 L530.5 395.5 L531.5 396.5 L532.5 396.5 L533.5 396.5 L534.5 395.5 L535.5 394.5 L536.5 392.5 L537.5 391.5 L538.5 388.5 L539.5 386.5 L540.5 383.5 L541.5 380.5 L542.5 377.5 L543.5 374.5 L544.5 371.5 L545.5 368.5 L546.5 366.5 L547.5 363.5 L548.5 361.5 L549.5 359.5 L550.5 358.5 L551.5 357.5 L552.5 356.5 L553.5 356.5 L554.5 356.5 L555.5 357.5 L556.5 358.5 L557.5 360.5 L558.5 362.5 L559.5 364.5 L560.5 366.5 L561.5 369.5 L562.5 372.5 L563.5 375.5 L564.5 378.5 L565.5 381.5 L566.5 384.5 L567.5 387.5 L568.5 389.5 L569.5 391.5 L570.5 393.5 L571.5 394.5 L572.5 395.5 L573.5 396.5 L574.5 396.5 L575.5 396.5 L576.5 395.5 L577.5 394.5 L578.5 392.5 L579.5 390.5 L580.5 388.5 L581.5 385.5 L582.5 382.5 L583.5 380.5 L584.5 377.5 L585.5 374.5 L586.5 371.5 L587.5 368.5 L588.5 365.5 L589.5 363.5 L590.5 361.5 L591.5 359.5 L592.5 358.5 L593.5 357.5 L594.5 356.5 L595.5 356.5 L596.5 356.5 L597.5 357.5 L598.5 358.5 L599.5 360.5 L600.5 362.5 L601.5 364.5 L602.5 367.5 L603.5 370.5 L604.5 373.5 L605.5 376.5 L606.5 379.5 L607.5 382.5 L608.5 384.5 L609.5 387.5 L610.5 389.5 L611.5 392.5 L612.5 393.5 L613.5 395.5 L614.5 395.5 L615.5 396.5 L616.5 396.5 L617.5 396.5 L618.5 395.5 L619.5 393.5 L620.5 392.5 L621.5 390.5 L622.5 387.5 L623.5 385.5 L624.5 382.5 L625.5 379.5 L626.5 376.5 L627.5 373.5 L628.5 370.5 L629.5 367.5 L630.5 365.5 L631.5 362.5 L632.5 360.5 L633.5 359.5 L634.5 357.5 L635.5 356.5 L636.5 356.5 L637.5 356.5 L638.5 357.5 L639.5 357.5 L640.5 359.5 L641.5 361.5 L642.5 363.5 L643.5 365.5 L644.5 368.5 L645.5 370.5 L646.5 373.5 L647.5 376.5 L648.5 379.5 L649.5 382.5 L650.5 385.5 L651.5 388.5 L652.5 390.5 L653.5 392.5 L654.5 394.5 L655.5 395.5 L656.5 396.5 L657.5 396.5 L658.5 396.5 L659.5 395.5 L660.5 394.5 L661.5 393.5 L662.5 391.5 L663.5 389.5 L664.5 387.5 L665.5 384.5 L666.5 381.5 L667.5 378.5 L668.5 375.5 L669.5 372.5 L670.5 369.5 L671.5 367.5 L672.5 364.5 L673.5 362.5 L674.5 360.5 L675.5 358.5 L676.5 357.5 L677.5 356.5 L678.5 356.5 L679.5 356.5 L680.5 357.5 L681.5 358.5 L682.5 359.5 L683.5 361.5 L684.5 363.5 L685.5 366.5 L686.5 368.5 L687.5 371.5 L688.5 374.5 L689.5 377.5 L690.5 380.5 L691.5 383.5 L692.5 386.5 L693.5 388.5 L694.5 390.5 L695.5 392.5 L696.5 394.5 L697.5 395.5 L698.5 396.5 L699.5 396.5 L700.5 396.5 L701.5 395.5 L702.5 394.5 L703.5 393.5 L704.5 391.5 L705.5 389.5 L706.5 386.5 L707.5 384.5 L708.5 381.5 L709.5 378.5 L710.5 375.5 L711.5 372.5 L712.5 369.5 L713.5 366.5 L714.5 364.5 L715.5 361.5 L716.5 360.5 L717.5 358.5 L718.5 357.5 L719.5 356.5 L720.5 356.5 L721.5 356.5 L722.5 357.5 L723.5 358.5 L724.5 359.5 L725.5 361.5 L726.5 364.5 L727.5 366.5 L728.5 369.5 L729.5 372.5 L730.5 375.5 L731.5 378.5 L732.5 381.5 L733.5 383.5 L734.5 386.5 L735.5 389.5 L736.5 391.5 L737.5 393.5 L738.5 394.5 L739.5 395.5 L740.5 396.5 L741.5 396.5 L742.5 396.5 L743.5 395.5 L744.5 394.5 L745.5 392.5 L746.5 390.5 L747.5 388.5 L748.5 386.5 L749.5 383.5 L750.5 380.5 L751.5 377.5 L752.5 374.5 L753.5 371.5 L754.5 368.5 L755.5 366.5 L756.5 363.5 L757.5 361.5 L758.5 359.5 L759.5 358.5 L760.5 357.5 L761.5 356.5 L762.5 356.5 L763.5 356.5 L764.5 357.5 L765.5 358.5 L766.5 360.5 L767.5 362.5 L768.5 364.5 L769.5 367.5 L770.5 369.5 L771.5 372.5 L772.5 375.5 L773.5 378.5 L774.5 381.5 L775.5 384.5 L776.5 387.5 L777.5 389.5 L778.5 391.5 L779.5 393.5 L780.5 394.5 L781.5 395.5 L782.5 396.5 L783.5 396.5 L784.5 396.5 L785.5 395.5 L786.5 394.5 L787.5 392.5 L788.5 390.5 L789.5 388.5 L790.5 385.5 L791.5 382.5 L792.5 379.5 L793.5 376.5 L794.5 373.5 L795.5 370.5 L796.5 368.5 L797.5 365.5 L798.5 363.5 L799.5 361.5 L800.5 359.5 L801.5 357.5 L802.5 357.5 L803.5 356.5 L804.5 356.5 L805.5 356.5 L806.5 357.5 L807.5 359.5 L808.5 360.5 L809.5 362.5 L810.5 365.5 L811.5 367.5 L812.5 370.5 L813.5 373.5 L814.5 376.5 L815.5 379.5 L816.5 382.5 L817.5 385.5 L818.5 387.5 L819.5 390.5 L820.5 392.5 L821.5 393.5 L822.5 395.5 L823.5 396.5 L824.5 396.5 L825.5 396.5 L826.5 395.5 L827.5 395.5 L828.5 393.5 L829.5 392.5 L830.5 389.5 L831.5 387.5 L832.5 385.5 L833.5 382.5 L834.5 379.5 L835.5 376.5 L836.5 373.5 L837.5 370.5 L838.5 367.5 L839.5 364.5 L840.5 362.5 L841.5 360.5 L842.5 359.5 L843.5 357.5 L844.5 356.5 L845.5 356.5 L846.5 356.5 L847.5 357.5 L848.5 358.5 L849.5 359.5 L850.5 361.5 L851.5 363.5 L852.5 365.5 L853.5 368.5 L854.5 371.5 L855.5 374.5 L856.5 377.5 L857.5 380.5 L858.5 382.5 L859.5 385.5 L860.5 388.5 L861.5 390.5 L862.5 392.5 L863.5 394.5 L864.5 395.5 L865.5 396.5 L866.5 396.5 L867.5 396.5 L868.5 395.5 L869.5 394.5 L870.5 393.5 L871.5 391.5 L872.5 389.5 L873.5 387.5 L874.5 384.5 L875.5 381.5 L876.5 378.5 L877.5 375.5 L878.5 372.5 L879.5 369.5 L880.5 367.5 L881.5 364.5 L882.5 362.5 L883.5 360.5 L884.5 358.5 L885.5 357.5 L886.5 356.5 L887.5 356.5 L888.5 356.5 L889.5 357.5 L890.5 358.5 L891.5 359.5 L892.5 361.5 L893.5 363.5 L894.5 366.5 L895.5 368.5 L896.5 371.5 L897.5 374.5 L898.5 377.5 L899.5 380.5 L900.5 383.5 L901.5 386.5 L902.5 388.5 L903.5 391.5 L904.5 392.5 L905.5 394.5 L906.5 395.5 L907.5 396.5 L908.5 396.5 L908.5 387.5 L908.5 395.5 L909.5 395.5 L909.5 396.5 L909.5 385.5 L910.5 382.5 L910.5 359.5 L911.5 357.5 L911.5 356.5 L911.5 365.5 L912.5 368.5 L912.5 392.5 L913.5 394.5 L913.5 396.5 L913.5 389.5 L914.5 386.5 L914.5 362.5 L915.5 360.5 L915.5 356.5 L915.5 361.5 L916.5 364.5 L916.5 389.5 L917.5 391.5 L917.5 396.5 L917.5 392.5 L918.5 390.5 L918.5 365.5 L919.5 363.5 L919.5 356.5 L919.5 358.5 L920.5 360.5 L920.5 384.5 L921.5 387.5 L921.5 396.5 L921.5 395.5 L922.5 393.5 L922.5 370.5 L923.5 367.5 L923.5 356.5 L923.5 357.5 L924.5 358.5 L924.5 380.5 L925.5 383.5 L925.5 396.5 L926.5 395.5 L926.5 375.5 L927.5 372.5 L927.5 356.5 L928.5 356.5 L928.5 375.5 L929.5 378.5 L929.5 396.5 L930.5 396.5 L930.5 380.5 L931.5 377.5 L931.5 357.5 L932.5 356.5 L932.5 370.5 L933.5 373.5 L933.5 395.5 L934.5 395.5 L934.5 396.5 L934.5 385.5 L935.5 382.5 L935.5 359.5 L936.5 357.5 L936.5 356.5 L936.5 365.5 L937.5 368.5 L937.5 392.5 L938.5 394.5 L938.5 396.5 L938.5 389.5 L939.5 386.5 L939.5 362.5 L940.5 360.5 L940.5 356.5 L940.5 361.5 L941.5 364.5 L941.5 389.5 L942.5 391.5 L942.5 396.5 L942.5 392.5 L943.5 390.5 L943.5 365.5 L944.5 363.5 L944.5 356.5 L944.5 358.5 L945.5 360.5 L945.5 384.5 L946.5 387.5 L946.5 396.5 L946.5 395.5 L947.5 393.5 L947.5 370.5 L948.5 367.5 L948.5 356.5 L948.5 357.5 L949.5 358.5 L949.5 380.5 L950.5 383.5 L950.5 396.5 L951.5 395.5 L951.5 375.5 L952.5 372.5 L952.5 356.5 L953.5 356.5 L953.5 375.5 L954.5 378.5 L954.5 396.5 L955.5 396.5 L955.5 380.5 L956.5 377.5 L956.5 357.5 L957.5 356.5 L957.5 370.5 L958.5 373.5 L958.5 395.5 L959.5 395.5 L959.5 396.5 L959.5 385.5 L960.5 382.5 L960.5 359.5 L961.5 357.5 L961.5 356.5 L961.5 365.5 L962.5 368.5 L962.5 392.5 L963.5 394.5 L963.5 396.5 L963.5 389.5 L964.5 386.5 L964.5 362.5 L965.5 360.5 L965.5 356.5 L965.5 361.5 L966.5 364.5 L966.5 389.5 L967.5 391.5 L967.5 396.5 L967.5 392.5 L968.5 390.5 L968.5 365.5 L969.5 363.5 L969.5 356.5 L969.5 358.5 L970.5 360.5 L970.5 384.5 L971.5 387.5 L971.5 396.5 L971.5 395.5 L972.5 393.5 L972.5 370.5 L973.5 367.5 L973.5 356.5 L973.5 357.5 L974.5 358.5 L974.5 380.5 L975.5 383.5 L975.5 396.5 L976.5 395.5 L976.5 375.5 L977.5 372.5 L977.5 356.5 L978.5 356.5 L978.5 375.5 L979.5 378.5 L979.5 396.5 L980.5 396.5 L980.5 380.5 L981.5 377.5 L981.5 357.5 L982.5 356.5 L982.5 370.5 L983.5 373.5 L983.5 395.5 L984.5 395.5 L984.5 396.5 L984.5 385.5 L985.5 382.5 L985.5 359.5 L986.5 357.5 L986.5 356.5 L986.5 365.5 L987.5 368.5 L987.5 392.5 L988.5 394.5 L988.5 396.5 L988.5 389.5 L989.5 386.5 L989.5 362.5 L990.5 360.5 L990.5 356.5 L990.5 361.5 L991.5 364.5 L991.5 389.5 L992.5 391.5 L992.5 396.5 L992.5 392.5 L993.5 390.5 L993.5 365.5 L994.5 363.5 L994.5 356.5 L994.5 358.5 L995.5 360.5 L995.5 384.5 L996.5 387.5 L996.5 396.5 L996.5 395.5 L997.5 393.5 L997.5 370.5 L998.5 367.5 L998.5 356.5 L998.5 357.5 L999.5 358.5 L999.5 380.5 L1000.5 383.5 L1000.5 396.5 L1001.5 395.5 L1001.5 375.5 L1002.5 372.5 L1002.5 356.5 L1003.5 356.5 L1003.5 375.5 L1004.5 378.5 L1004.5 396.5 L1005.5 396.5 L1005.5 380.5 L1006.5 377.5 L1006.5 357.5 L1007.5 356.5 L1007.5 370.5 L1008.5 373.5 L1008.5 395.5 L1009.5 395.5 L1009.5 396.5 L1009.5 385.5 L1010.5 382.5 L1010.5 359.5 L1011.5 357.5 L1011.5 356.5 L1011.5 365.5 L1012.5 368.5 L1012.5 392.5 L1013.5 394.5 L1013.5 396.5 L1013.5 389.5 L1014.5 386.5 L1014.5 362.5 L1015.5 360.5 L1015.5 356.5 L1015.5 361.5 L1016.5 364.5 L1016.5 389.5 L1017.5 391.5 L1017.5 396.5 L1017.5 392.5 L1018.5 390.5 L1018.5 365.5 L1019.5 363.5 L1019.5 356.5 L1019.5 358.5 L1020.5 360.5 L1020.5 384.5 L1021.5 387.5 L1021.5 396.5 L1021.5 395.5 L1022.5 393.5 L1022.5 370.5 L1023.5 367.5 L1023.5 356.5 L1023.5 357.5 L1024.5 358.5 L1024.5 380.5 L1025.5 383.5 L1025.5 396.5 L1026.5 395.5 L1026.5 375.5 L1027.5 372.5 L1027.5 356.5 L1028.5 356.5 L1028.5 375.5 L1029.5 378.5 L1029.5 396.5 L1030.5 396.5 L1030.5 380.5 L1031.5 377.5 L1031.5 357.5 L1032.5 356.5 L1032.5 370.5 L1033.5 373.5 L1033.5 395.5 L1034.5 395.5 L1034.5 396.5 L1034.5 385.5 L1035.5 382.5 L1035.5 359.5 L1036.5 357.5 L1036.5 356.5 L1036.5 365.5 L1037.5 368.5 L1037.5 392.5 L1038.5 394.5 L1038.5 396.5 L1038.5 389.5 L1039.5 386.5 L1039.5 362.5 L1040.5 360.5 L1040.5 356.5 L1040.5 361.5 L1041.5 364.5 L1041.5 389.5 L1042.5 391.5 L1042.5 396.5 L1042.5 392.5 L1043.5 390.5 L1043.5 365.5 L1044.5 363.5 L1044.5 356.5 L1044.5 358.5 L1045.5 360.5 L1045.5 384.5 L1046.5 387.5 L1046.5 396.5 L1046.5 395.5 L1047.5 393.5 L1047.5 370.5 L1048.5 367.5 L1048.5 356.5 L1048.5 357.5 L1049.5 358.5 L1049.5 380.5 L1050.5 383.5 L1050.5 396.5 L1051.5 395.5 L1051.5 375.5 L1052.5 372.5 L1052.5 356.5 L1053.5 356.5 L1053.5 375.5 L1054.5 378.5 L1054.5 396.5 L1055.5 396.5 L1055.5 380.5 L1056.5 377.5 L1056.5 357.5 L1057.5 356.5 L1057.5 370.5 L1058.5 373.5 L1058.5 395.5 L1059.5 395.5 L1059.5 396.5 L1059.5 385.5 L1060.5 382.5 L1060.5 359.5 L1061.5 357.5 L1061.5 356.5 L1061.5 365.5 L1062.5 368.5 L1062.5 392.5 L1063.5 394.5 L1063.5 396.5 L1063.5 389.5 L1064.5 386.5 L1064.5 362.5 L1065.5 360.5 L1065.5 356.5 L1065.5 361.5 L1066.5 364.5 L1066.5 389.5 L1067.5 391.5 L1067.5 396.5 L1067.5 392.5 L1068.5 390.5 L1068.5 365.5 L1069.5 363.5 L1069.5 356.5 L1069.5 358.5 L1070.5 360.5 L1070.5 384.5 L1071.5 387.5 L1071.5 396.5 L1071.5 395.5 L1072.5 393.5 L1072.5 370.5 L1073.5 367.5 L1073.5 356.5 L1073.5 357.5 L1074.5 358.5 L1074.5 380.5 L1075.5 383.5 L1075.5 396.5 L1076.5 395.5 L1076.5 375.5 L1077.5 372.5 L1077.5 356.5 L1078.5 356.5 L1078.5 375.5 L1079.5 378.5 L1079.5 396.5 L1080.5 396.5 L1080.5 380.5 L1081.5 377.5 L1081.5 357.5 L1082.5 356.5 L1082.5 370.5 L1083.5 373.5 L1083.5 395.5 L1084.5 395.5 L1084.5 396.5 L1084.5 385.5 L1085.5 382.5 L1085.5 359.5 L1086.5 357.5 L1086.5 356.5 L1086.5 365.5 L1087.5 368.5 L1087.5 392.5 L1088.5 394.5 L1088.5 396.5 L1088.5 389.5 L1089.5 386.5 L1089.5 362.5 L1090.5 360.5 L1090.5 356.5 L1090.5 361.5 L1091.5 364.5 L1091.5 389.5 L1092.5 391.5 L1092.5 396.5 L1092.5 392.5 L1093.5 390.5 L1093.5 365.5 L1094.5 363.5 L1094.5 356.5 L1094.5 358.5 L1095.5 360.5 L1095.5 384.5 L1096.5 387.5 L1096.5 396.5 L1096.5 395.5 L1097.5 393.5 L1097.5 370.5 L1098.5 367.5 L1098.5 356.5 L1098.5 357.5 L1099.5 358.5 L1099.5 380.5 L1100.5 383.5 L1100.5 396.5 L1101.5 395.5 L1101.5 375.5 L1102.5 372.5 L1102.5 356.5 L1103.5 356.5 L1103.5 375.5 L1104.5 378.5 L1104.5 396.5 L1105.5 396.5 L1105.5 380.5 L1106.5 377.5 L1106.5 357.5 L1107.5 356.5 L1107.5 370.5 L1108.5 373.5 L1108.5 395.5 L1109.5 395.5 L1109.5 396.5 L1109.5 385.5 L1110.5 382.5 L1110.5 359.5 L1111.5 357.5 L1111.5 356.5 L1111.5 365.5 L1112.5 368.5 L1112.5 392.5 L1113.5 394.5 L1113.5 396.5 L1113.5 389.5 L1114.5 386.5 L1114.5 362.5 L1115.5 360.5 L1115.5 356.5 L1115.5 361.5 L1116.5 364.5 L1116.5 389.5 L1117.5 391.5 L1117.5 396.5 L1117.5 392.5 L1118.5 390.5 L1118.5 365.5 L1119.5 363.5 L1119.5 356.5 L1119.5 358.5 L1120.5 360.5 L1120.5 384.5 L1121.5 387.5 L1121.5 396.5 L1121.5 395.5 L1122.5 393.5 L1122.5 370.5 L1123.5 367.5 L1123.5 356.5 L1123.5 357.5 L1124.5 358.5 L1124.5 380.5 L1125.5 383.5 L1125.5 396.5 L1126.5 395.5 L1126.5 375.5 L1127.5 372.5 L1127.5 356.5 L1128.5 356.5 L1128.5 375.5 L1129.5 378.5 L1129.5 396.5 L1130.5 396.5 L1130.5 380.5 L1131.5 377.5 L1131.5 357.5 L1132.5 356.5 L1132.5 370.5 L1133.5 373.5 L1133.5 395.5 L1134.5 395.5 L1134.5 396.5 L1134.5 385.5 L1135.5 382.5 L1135.5 359.5 L1136.5 357.5 L1136.5 356.5 L1136.5 365.5 L1137.5 368.5 L1137.5 392.5 L1138.5 394.5 L1138.5 396.5 L1138.5 389.5 L1139.5 386.5 L1139.5 362.5 L1140.5 360.5 L1140.5 356.5 L1140.5 361.5 L1141.5 364.5 L1141.5 389.5 L1142.5 391.5 L1142.5 396.5 L1142.5 392.5 L1143.5 390.5 L1143.5 365.5 L1144.5 363.5 L1144.5 356.5 L1144.5 358.5 L1145.5 360.5 L1145.5 384.5 L1146.5 387.5 L1146.5 396.5 L1146.5 395.5 L1147.5 393.5 L1147.5 370.5 L1148.5 367.5 L1148.5 356.5 L1148.5 357.5 L1149.5 358.5 L1149.5 380.5 L1150.5 383.5 L1150.5 396.5 L1151.5 395.5 L1151.5 375.5 L1152.5 372.5 L1152.5 356.5 L1153.5 356.5 L1153.5 375.5 L1154.5 378.5 L1154.5 396.5 L1155.5 396.5 L1155.5 380.5 L1156.5 377.5 L1156.5 357.5 L1157.5 356.5 L1157.5 370.5 L1158.5 373.5 L1158.5 395.5 L1159.5 395.5 L1159.5 396.5 L1159.5 385.5 L1160.5 382.5 L1160.5 359.5 L1161.5 357.5 L1161.5 356.5 L1161.5 365.5 L1162.5 368.5 L1162.5 392.5 L1163.5 394.5 L1163.5 396.5 L1163.5 389.5 L1164.5 386.5 L1164.5 362.5 L1165.5 360.5 L1165.5 356.5 L1165.5 361.5 L1166.5 364.5 L1166.5 389.5 L1167.5 391.5 L1167.5 396.5 L1167.5 392.5 L1168.5 390.5 L1168.5 365.5 L1169.5 363.5 L1169.5 356.5 L1169.5 358.5 L1170.5 360.5 L1170.5 384.5 L1171.5 387.5 L1171.5 396.5 L1171.5 395.5 L1172.5 393.5 L1172.5 370.5 L1173.5 367.5 L1173.5 356.5 L1173.5 357.5 L1174.5 358.5 L1174.5 380.5 L1175.5 383.5 L1175.5 396.5 L1176.5 395.5 L1176.5 375.5 L1177.5 372.5 L1177.5 356.5 L1178.5 356.5 L1178.5 375.5 L1179.5 378.5 L1179.5 396.5 L1180.5 396.5 L1180.5 380.5 L1181.5 377.5 L1181.5 357.5 L1182.5 356.5 L1182.5 370.5 L1183.5 373.5 L1183.5 395.5 L1184.5 395.5 L1184.5 396.5 L1184.5 385.5 L1185.5 382.5 L1185.5 359.5 L1186.5 357.5 L1186.5 356.5 L1186.5 365.5 L1187.5 368.5 L1187.5 392.5 L1188.5 394.5 L1188.5 396.5 L1188.5 389.5 L1189.5 386.5 L1189.5 362.5 L1190.5 360.5 L1190.5 356.5 L1190.5 361.5 L1191.5 364.5 L1191.5 389.5 L1192.5 391.5 L1192.5 396.5 L1192.5 392.5 L1193.5 390.5 L1193.5 365.5 L1194.5 363.5 L1194.5 356.5 L1194.5 358.5 L1195.5 360.5 L1195.5 384.5 L1196.5 387.5 L1196.5 396.5 L1196.5 395.5 L1197.5 393.5 L1197.5 370.5 L1198.5 367.5 L1198.5 356.5 L1198.5 357.5 L1199.5 358.5 L1199.5 380.5 L1200.5 383.5 L1200.5 396.5 L1201.5 395.5 L1201.5 375.5 L1202.5 372.5 L1202.5 356.5 L1203.5 356.5 L1203.5 375.5 L1204.5 378.5 L1204.5 396.5 L1205.5 396.5 L1205.5 380.5 L1206.5 377.5 L1206.5 357.5 L1207.5 356.5 L1207.5 370.5 L1208.5 373.5 L1208.5 395.5 L1209.5 395.5 L1209.5 396.5 L1209.5 385.5 L1210.5 382.5 L1210.5 359.5 L1211.5 357.5 L1211.5 356.5 L1211.5 365.5 L1212.5 368.5 L1212.5 392.5 L1213.5 394.5 L1213.5 396.5 L1213.5 389.5 L1214.5 386.5 L1214.5 362.5 L1215.5 360.5 L1215.5 356.5 L1215.5 361.5 L1216.5 364.5 L1216.5 389.5 L1217.5 391.5 L1217.5 396.5 L1217.5 392.5 L1218.5 390.5 L1218.5 365.5 L1219.5 363.5 L1219.5 356.5 L1219.5 358.5 L1220.5 360.5 L1220.5 384.5 L1221.5 387.5 L1221.5 396.5 L1221.5 395.5 L1222.5 393.5 L1222.5 370.5 L1223.5 367.5 L1223.5 356.5 L1223.5 357.5 L1224.5 358.5 L1224.5 380.5 L1225.5 383.5 L1225.5 396.5 L1226.5 395.5 L1226.5 375.5 L1227.5 372.5 L1227.5 356.5 L1228.5 356.5 L1228.5 375.5 L1229.5 378.5 L1229.5 396.5 L1230.5 396.5 L1230.5 380.5 L1231.5 377.5 L1231.5 357.5 L1232.5 356.5 L1232.5 370.5 L1233.5 373.5 L1233.5 395.5 L1234.5 395.5 L1234.5 396.5 L1234.5 385.5 L1235.5 382.5 L1235.5 359.5 L1236.5 357.5 L1236.5 356.5 L1236.5 365.5 L1237.5 368.5 L1237.5 392.5 L1238.5 394.5 L1238.5 396.5 L1238.5 389.5 L1239.5 386.5 L1239.5 362.5 L1240.5 360.5 L1240.5 356.5 L1240.5 361.5 L1241.5 364.5 L1241.5 389.5 L1242.5 391.5 L1242.5 396.5 L1242.5 392.5 L1243.5 390.5 L1243.5 365.5 L1244.5 363.5 L1244.5 356.5 L1244.5 358.5 L1245.5 360.5 L1245.5 384.5 L1246.5 387.5 L1246.5 396.5 L1246.5 395.5 L1247.5 393.5 L1247.5 370.5 L1248.5 367.5 L1248.5 356.5 L1248.5 357.5 L1249.5 358.5 L1249.5 380.5 L1250.5 383.5 L1250.5 396.5 L1251.5 395.5 L1251.5 375.5 L1252.5 372.5 L1252.5 356.5 L1253.5 356.5 L1253.5 375.5 L1254.5 378.5 L1254.5 396.5 L1255.5 396.5 L1255.5 380.5 L1256.5 377.5 L1256.5 357.5 L1257.5 356.5 L1257.5 370.5 L1258.5 373.5 L1258.5 395.5 L1259.5 395.5 L1259.5 396.5 L1259.5 385.5 L1260.5 382.5 L1260.5 359.5 L1261.5 357.5 L1261.5 356.5 L1261.5 365.5 L1262.5 368.5 L1262.5 392.5 L1263.5 394.5 L1263.5 396.5 L1263.5 389.5 L1264.5 386.5 L1264.5 362.5 L1265.5 360.5 L1265.5 356.5 L1265.5 361.5 L1266.5 364.5 L1266.5 389.5 L1267.5 391.5 L1267.5 396.5 L1267.5 392.5 L1268.5 390.5 L1268.5 365.5 L1269.5 363.5 L1269.5 356.5 L1269.5 358.5 L1270.5 360.5 L1270.5 384.5 L1271.5 387.5 L1271.5 396.5 L1271.5 395.5 L1272.5 393.5 L1272.5 370.5 L1273.5 367.5 L1273.5 356.5 L1273.5 357.5 L1274.5 358.5 L1274.5 380.5 L1275.5 383.5 L1275.5 396.5 L1276.5 395.5 L1276.5 375.5 L1277.5 372.5 L1277.5 356.5 L1278.5 356.5 L1278.5 375.5 L1279.5 378.5 L1279.5 396.5 L1280.5 396.5 L1280.5 380.5 L1281.5 377.5 L1281.5 357.5 L1282.5 356.5 L1282.5 370.5 L1283.5 373.5 L1283.5 395.5 L1284.5 395.5 L1284.5 396.5 L1284.5 385.5 L1285.5 382.5 L1285.5 359.5 L1286.5 357.5 L1286.5 356.5 L1286.5 365.5 L1287.5 368.5 L1287.5 392.5 L1288.5 394.5 L1288.5 396.5 L1288.5 389.5 L1289.5 386.5 L1289.5 362.5 L1290.5 360.5 L1290.5 356.5 L1290.5 361.5 L1291.5 364.5 L1291.5 389.5 L1292.5 391.5 L1292.5 396.5 L1292.5 392.5 L1293.5 390.5 L1293.5 365.5 L1294.5 363.5 L1294.5 356.5 L1294.5 358.5 L1295.5 360.5 L1295.5 384.5 L1296.5 387.5 L1296.5 396.5 L1296.5 395.5 L1297.5 393.5 L1297.5 370.5 L1298.5 367.5 L1298.5 356.5 L1298.5 357.5 L1299.5 358.5 L1299.5 380.5 L1300.5 383.5 L1300.5 396.5 L1301.5 395.5 L1301.5 375.5 L1302.5 372.5 L1302.5 356.5 L1303.5 356.5 L1303.5 375.5 L1304.5 378.5 L1304.5 396.5 L1305.5 396.5 L1305.5 380.5 L1306.5 377.5 L1306.5 357.5 L1307.5 356.5 L1307.5 370.5 L1308.5 373.5 L1308.5 395.5 L1309.5 395.5 L1309.5 396.5 L1309.5 385.5 L1310.5 382.5 L1310.5 359.5 L1311.5 357.5 L1311.5 356.5 L1311.5 365.5 L1312.5 368.5 L1312.5 392.5 L1313.5 394.5 L1313.5 396.5 L1313.5 389.5 L1314.5 386.5 L1314.5 362.5 L1315.5 360.5 L1315.5 356.5 L1315.5 361.5 L1316.5 364.5 L1316.5 389.5 L1317.5 391.5 L1317.5 396.5 L1317.5 392.5 L1318.5 390.5 L1318.5 365.5 L1319.5 363.5 L1319.5 356.5 L1319.5 358.5 L1320.5 360.5 L1320.5 384.5 L1321.5 387.5 L1321.5 396.5 L1321.5 395.5 L1322.5 393.5 L1322.5 370.5 L1323.5 367.5 L1323.5 356.5 L1323.5 357.5 L1324.5 358.5 L1324.5 380.5 L1325.5 383.5 L1325.5 396.5 L1326.5 395.5 L1326.5 375.5 L1327.5 372.5" stroke="#00c800" stroke-linejoin="round"/><path d="M409.5 467.5 L410.5 465.5 L411.5 464.5 L412.5 462.5 L413.5 459.5 L414.5 457.5 L415.5 454.5 L416.5 451.5 L417.5 448.5 L418.5 445.5 L419.5 442.5 L420.5 439.5 L421.5 437.5 L422.5 434.5 L423.5 432.5 L424.5 431.5 L425.5 429.5 L426.5 429.5 L427.5 428.5 L428.5 428.5 L429.5 429.5 L430.5 429.5 L431.5 431.5 L432.5 432.5 L433.5 434.5 L434.5 437.5 L435.5 439.5 L436.5 442.5 L437.5 445.5 L438.5 448.5 L439.5 451.5 L440.5 454.5 L441.5 457.5 L442.5 459.5 L443.5 462.5 L444.5 464.5 L445.5 465.5 L446.5 467.5 L447.5 468.5 L448.5 468.5 L449.5 468.5 L450.5 467.5 L451.5 466.5 L452.5 465.5 L453.5 463.5 L454.5 461.5 L455.5 459.5 L456.5 456.5 L457.5 453.5 L458.5 451.5 L459.5 448.5 L460.5 445.5 L461.5 442.5 L462.5 439.5 L463.5 436.5 L464.5 434.5 L465.5 432.5 L466.5 430.5 L467.5 429.5 L468.5 428.5 L469.5 428.5 L470.5 428.5 L471.5 429.5 L472.5 430.5 L473.5 431.5 L474.5 433.5 L475.5 435.5 L476.5 437.5 L477.5 440.5 L478.5 443.5 L479.5 446.5 L480.5 449.5 L481.5 452.5 L482.5 455.5 L483.5 457.5 L484.5 460.5 L485.5 462.5 L486.5 464.5 L487.5 466.5 L488.5 467.5 L489.5 468.5 L490.5 468.5 L491.5 468.5 L492.5 467.5 L493.5 466.5 L494.5 465.5 L495.5 463.5 L496.5 461.5 L497.5 458.5 L498.5 456.5 L499.5 453.5 L500.5 450.5 L501.5 447.5 L502.5 444.5 L503.5 441.5 L504.5 438.5 L505.5 436.5 L506.5 434.5 L507.5 432.5 L508.5 430.5 L509.5 429.5 L510.5 428.5 L511.5 428.5 L512.5 428.5 L513.5 429.5 L514.5 430.5 L515.5 431.5 L516.5 433.5 L517.5 435.5 L518.5 438.5 L519.5 441.5 L520.5 443.5 L521.5 446.5 L522.5 449.5 L523.5 452.5 L524.5 455.5 L525.5 458.5 L526.5 460.5 L527.5 463.5 L528.5 465.5 L529.5 466.5 L530.5 467.5 L531.5 468.5 L532.5 468.5 L533.5 468.5 L534.5 467.5 L535.5 466.5 L536.5 464.5 L537.5 463.5 L538.5 460.5 L539.5 458.5 L540.5 455.5 L541.5 452.5 L542.5 449.5 L543.5 446.5 L544.5 443.5 L545.5 440.5 L546.5 438.5 L547.5 435.5 L548.5 433.5 L549.5 431.5 L550.5 430.5 L551.5 429.5 L552.5 428.5 L553.5 428.5 L554.5 428.5 L555.5 429.5 L556.5 430.5 L557.5 432.5 L558.5 434.5 L559.5 436.5 L560.5 438.5 L561.5 441.5 L562.5 444.5 L563.5 447.5 L564.5 450.5 L565.5 453.5 L566.5 456.5 L567.5 459.5 L568.5 461.5 L569.5 463.5 L570.5 465.5 L571.5 466.5 L572.5 467.5 L573.5 468.5 L574.5 468.5 L575.5 468.5 L576.5 467.5 L577.5 466.5 L578.5 464.5 L579.5 462.5 L580.5 460.5 L581.5 457.5 L582.5 454.5 L583.5 452.5 L584.5 449.5 L585.5 446.5 L586.5 443.5 L587.5 440.5 L588.5 437.5 L589.5 435.5 L590.5 433.5 L591.5 431.5 L592.5 430.5 L593.5 429.5 L594.5 428.5 L595.5 428.5 L596.5 428.5 L597.5 429.5 L598.5 430.5 L599.5 432.5 L600.5 434.5 L601.5 436.5 L602.5 439.5 L603.5 442.5 L604.5 445.5 L605.5 448.5 L606.5 451.5 L607.5 454.5 L608.5 456.5 L609.5 459.5 L610.5 461.5 L611.5 464.5 L612.5 465.5 L613.5 467.5 L614.5 467.5 L615.5 468.5 L616.5 468.5 L617.5 468.5 L618.5 467.5 L619.5 465.5 L620.5 464.5 L621.5 462.5 L622.5 459.5 L623.5 457.5 L624.5 454.5 L625.5 451.5 L626.5 448.5 L627.5 445.5 L628.5 442.5 L629.5 439.5 L630.5 437.5 L631.5 434.5 L632.5 432.5 L633.5 431.5 L634.5 429.5 L635.5 428.5 L636.5 428.5 L637.5 428.5 L638.5 429.5 L639.5 429.5 L640.5 431.5 L641.5 433.5 L642.5 435.5 L643.5 437.5 L644.5 440.5 L645.5 442.5 L646.5 445.5 L647.5 448.5 L648.5 451.5 L649.5 454.5 L650.5 457.5 L651.5 460.5 L652.5 462.5 L653.5 464.5 L654.5 466.5 L655.5 467.5 L656.5 468.5 L657.5 468.5 L658.5 468.5 L659.5 467.5 L660.5 466.5 L661.5 465.5 L662.5 463.5 L663.5 461.5 L664.5 459.5 L665.5 456.5 L666.5 453.5 L667.5 450.5 L668.5 447.5 L669.5 444.5 L670.5 441.5 L671.5 439.5 L672.5 436.5 L673.5 434.5 L674.5 432.5 L675.5 430.5 L676.5 429.5 L677.5 428.5 L678.5 428.5 L679.5 428.5 L680.5 429.5 L681.5 430.5 L682.5 431.5 L683.5 433.5 L684.5 435.5 L685.5 438.5 L686.5 440.5 L687.5 443.5 L688.5 446.5 L689.5 449.5 L690.5 452.5 L691.5 455.5 L692.5 458.5 L693.5 460.5 L694.5 462.5 L695.5 464.5 L696.5 466.5 L697.5 467.5 L698.5 468.5 L699.5 468.5 L700.5 468.5 L701.5 467.5 L702.5 466.5 L703.5 465.5 L704.5 463.5 L705.5 461.5 L706.5 458.5 L707.5 456.5 L708.5 453.5 L709.5 450.5 L710.5 447.5 L711.5 444.5 L712.5 441.5 L713.5 438.5 L714.5 436.5 L715.5 433.5 L716.5 432.5 L717.5 430.5 L718.5 429.5 L719.5 428.5 L720.5 428.5 L721.5 428.5 L722.5 429.5 L723.5 430.5 L724.5 431.5 L725.5 433.5 L726.5 436.5 L727.5 438.5 L728.5 441.5 L729.5 444.5 L730.5 447.5 L731.5 450.5 L732.5 453.5 L733.5 455.5 L734.5 458.5 L735.5 461.5 L736.5 463.5 L737.5 465.5 L738.5 466.5 L739.5 467.5 L740.5 468.5 L741.5 468.5 L742.5 468.5 L743.5 467.5 L744.5 466.5 L745.5 464.5 L746.5 462.5 L747.5 460.5 L748.5 458.5 L749.5 455.5 L750.5 452.5 L751.5 449.5 L752.5 446.5 L753.5 443.5 L754.5 440.5 L755.5 438.5 L756.5 435.5 L757.5 433.5 L758.5 431.5 L759.5 430.5 L760.5 429.5 L761.5 428.5 L762.5 428.5 L763.5 428.5 L764.5 429.5 L765.5 430.5 L766.5 432.5 L767.5 434.5 L768.5 436.5 L769.5 439.5 L770.5 441.5 L771.5 444.5 L772.5 447.5 L773.5 450.5 L774.5 453.5 L775.5 456.5 L776.5 459.5 L777.5 461.5 L778.5 463.5 L779.5 465.5 L780.5 466.5 L781.5 467.5 L782.5 468.5 L783.5 468.5 L784.5 468.5 L785.5 467.5 L786.5 466.5 L787.5 464.5 L788.5 462.5 L789.5 460.5 L790.5 457.5 L791.5 454.5 L792.5 451.5 L793.5 448.5 L794.5 445.5 L795.5 442.5 L796.5 440.5 L797.5 437.5 L798.5 435.5 L799.5 433.5 L800.5 431.5 L801.5 429.5 L802.5 429.5 L803.5 428.5 L804.5 428.5 L805.5 428.5 L806.5 429.5 L807.5 431.5 L808.5 432.5 L809.5 434.5 L810.5 437.5 L811.5 439.5 L812.5 442.5 L813.5 445.5 L814.5 448.5 L815.5 451.5 L816.5 454.5 L817.5 457.5 L818.5 459.5 L819.5 462.5 L820.5 464.5 L821.5 465.5 L822.5 467.5 L823.5 468.5 L824.5 468.5 L825.5 468.5 L826.5 467.5 L827.5 467.5 L828.5 465.5 L829.5 464.5 L830.5 461.5 L831.5 459.5 L832.5 457.5 L833.5 454.5 L834.5 451.5 L835.5 448.5 L836.5 445.5 L837.5 442.5 L838.5 439.5 L839.5 436.5 L840.5 434.5 L841.5 432.5 L842.5 431.5 L843.5 429.5 L844.5 428.5 L845.5 428.5 L846.5 428.5 L847.5 429.5 L848.5 430.5 L849.5 431.5 L850.5 433.5 L851.5 435.5 L852.5 437.5 L853.5 440.5 L854.5 443.5 L855.5 446.5 L856.5 449.5 L857.5 452.5 L858.5 454.5 L859.5 457.5 L860.5 460.5 L861.5 462.5 L862.5 464.5 L863.5 466.5 L864.5 467.5 L865.5 468.5 L866.5 468.5 L867.5 468.5 L868.5 467.5 L869.5 466.5 L870.5 465.5 L871.5 463.5 L872.5 461.5 L873.5 459.5 L874.5 456.5 L875.5 453.5 L876.5 450.5 L877.5 447.5 L878.5 444.5 L879.5 441.5 L880.5 439.5 L881.5 436.5 L882.5 434.5 L883.5 432.5 L884.5 430.5 L885.5 429.5 L886.5 428.5 L887.5 428.5 L888.5 428.5 L889.5 429.5 L890.5 430.5 L891.5 431.5 L892.5 433.5 L893.5 435.5 L894.5 438.5 L895.5 440.5 L896.5 443.5 L897.5 446.5 L898.5 449.5 L899.5 452.5 L900.5 455.5 L901.5 458.5 L902.5 460.5 L903.5 463.5 L904.5 464.5 L905.5 466.5 L906.5 467.5 L907.5 468.5 L908.5 468.5 L908.5 459.5 L908.5 467.5 L909.5 467.5 L909.5 468.5 L909.5 457.5 L910.5 454.5 L910.5 431.5 L911.5 429.5 L911.5 428.5 L911.5 437.5 L912.5 440.5 L912.5 464.5 L913.5 466.5 L913.5 468.5 L913.5 461.5 L914.5 458.5 L914.5 434.5 L915.5 432.5 L915.5 428.5 L915.5 433.5 L916.5 436.5 L916.5 461.5 L917.5 463.5 L917.5 468.5 L917.5 464.5 L918.5 462.5 L918.5 437.5 L919.5 435.5 L919.5 428.5 L919.5 430.5 L920.5 432.5 L920.5 456.5 L921.5 459.5 L921.5 468.5 L921.5 467.5 L922.5 465.5 L922.5 442.5 L923.5 439.5 L923.5 428.5 L923.5 429.5 L924.5 430.5 L924.5 452.5 L925.5 455.5 L925.5 468.5 L926.5 467.5 L926.5 447.5 L927.5 444.5 L927.5 428.5 L928.5 428.5 L928.5 447.5 L929.5 450.5 L929.5 468.5 L930.5 468.5 L930.5 452.5 L931.5 449.5 L931.5 429.5 L932.5 428.5 L932.5 442.5 L933.5 445.5 L933.5 467.5 L934.5 467.5 L934.5 468.5 L934.5 457.5 L935.5 454.5 L935.5 431.5 L936.5 429.5 L936.5 428.5 L936.5 437.5 L937.5 440.5 L937.5 464.5 L938.5 466.5 L938.5 468.5 L938.5 461.5 L939.5 458.5 L939.5 434.5 L940.5 432.5 L940.5 428.5 L940.5 433.5 L941.5 436.5 L941.5 461.5 L942.5 463.5 L942.5 468.5 L942.5 464.5 L943.5 462.5 L943.5 437.5 L944.5 435.5 L944.5 428.5 L944.5 430.5 L945.5 432.5 L945.5 456.5 L946.5 459.5 L946.5 468.5 L946.5 467.5 L947.5 465.5 L947.5 442.5 L948.5 439.5 L948.5 428.5 L948.5 429.5 L949.5 430.5 L949.5 452.5 L950.5 455.5 L950.5 468.5 L951.5 467.5 L951.5 447.5 L952.5 444.5 L952.5 428.5 L953.5 428.5 L953.5 447.5 L954.5 450.5 L954.5 468.5 L955.5 468.5 L955.5 452.5 L956.5 449.5 L956.5 429.5 L957.5 428.5 L957.5 442.5 L958.5 445.5 L958.5 467.5 L959.5 467.5 L959.5 468.5 L959.5 457.5 L960.5 454.5 L960.5 431.5 L961.5 429.5 L961.5 428.5 L961.5 437.5 L962.5 440.5 L962.5 464.5 L963.5 466.5 L963.5 468.5 L963.5 461.5 L964.5 458.5 L964.5 434.5 L965.5 432.5 L965.5 428.5 L965.5 433.5 L966.5 436.5 L966.5 461.5 L967.5 463.5 L967.5 468.5 L967.5 464.5 L968.5 462.5 L968.5 437.5 L969.5 435.5 L969.5 428.5 L969.5 430.5 L970.5 432.5 L970.5 456.5 L971.5 459.5 L971.5 468.5 L971.5 467.5 L972.5 465.5 L972.5 442.5 L973.5 439.5 L973.5 428.5 L973.5 429.5 L974.5 430.5 L974.5 452.5 L975.5 455.5 L975.5 468.5 L976.5 467.5 L976.5 447.5 L977.5 444.5 L977.5 428.5 L978.5 428.5 L978.5 447.5 L979.5 450.5 L979.5 468.5 L980.5 468.5 L980.5 452.5 L981.5 449.5 L981.5 429.5 L982.5 428.5 L982.5 442.5 L983.5 445.5 L983.5 467.5 L984.5 467.5 L984.5 468.5 L984.5 457.5 L985.5 454.5 L985.5 431.5 L986.5 429.5 L986.5 428.5 L986.5 437.5 L987.5 440.5 L987.5 464.5 L988.5 466.5 L988.5 468.5 L988.5 461.5 L989.5 458.5 L989.5 434.5 L990.5 432.5 L990.5 428.5 L990.5 433.5 L991.5 436.5 L991.5 461.5 L992.5 463.5 L992.5 468.5 L992.5 464.5 L993.5 462.5 L993.5 437.5 L994.5 435.5 L994.5 428.5 L994.5 430.5 L995.5 432.5 L995.5 456.5 L996.5 459.5 L996.5 468.5 L996.5 467.5 L997.5 465.5 L997.5 442.5 L998.5 439.5 L998.5 428.5 L998.5 429.5 L999.5 430.5 L999.5 452.5 L1000.5 455.5 L1000.5 468.5 L1001.5 467.5 L1001.5 447.5 L1002.5 444.5 L1002.5 428.5 L1003.5 428.5 L1003.5 447.5 L1004.5 450.5 L1004.5 468.5 L1005.5 468.5 L1005.5 452.5 L1006.5 449.5 L1006.5 429.5 L1007.5 428.5 L1007.5 442.5 L1008.5 445.5 L1008.5 467.5 L1009.5 467.5 L1009.5 468.5 L1009.5 457.5 L1010.5 454.5 L1010.5 431.5 L1011.5 429.5 L1011.5 428.5 L1011.5 437.5 L1012.5 440.5 L1012.5 464.5 L1013.5 466.5 L1013.5 468.5 L1013.5 461.5 L1014.5 458.5 L1014.5 434.5 L1015.5 432.5 L1015.5 428.5 L1015.5 433.5 L1016.5 436.5 L1016.5 461.5 L1017.5 463.5 L1017.5 468.5 L1017.5 464.5 L1018.5 462.5 L1018.5 437.5 L1019.5 435.5 L1019.5 428.5 L1019.5 430.5 L1020.5 432.5 L1020.5 456.5 L1021.5 459.5 L1021.5 468.5 L1021.5 467.5 L1022.5 465.5 L1022.5 442.5 L1023.5 439.5 L1023.5 428.5 L1023.5 429.5 L1024.5 430.5 L1024.5 452.5 L1025.5 455.5 L1025.5 468.5 L1026.5 467.5 L1026.5 447.5 L1027.5 444.5 L1027.5 428.5 L1028.5 428.5 L1028.5 447.5 L1029.5 450.5 L1029.5 468.5 L1030.5 468.5 L1030.5 452.5 L1031.5 449.5 L1031.5 429.5 L1032.5 428.5 L1032.5 442.5 L1033.5 445.5 L1033.5 467.5 L1034.5 467.5 L1034.5 468.5 L1034.5 457.5 L1035.5 454.5 L1035.5 431.5 L1036.5 429.5 L1036.5 428.5 L1036.5 437.5 L1037.5 440.5 L1037.5 464.5 L1038.5 466.5 L1038.5 468.5 L1038.5 461.5 L1039.5 458.5 L1039.5 434.5 L1040.5 432.5 L1040.5 428.5 L1040.5 433.5 L1041.5 436.5 L1041.5 461.5 L1042.5 463.5 L1042.5 468.5 L1042.5 464.5 L1043.5 462.5 L1043.5 437.5 L1044.5 435.5 L1044.5 428.5 L1044.5 430.5 L1045.5 432.5 L1045.5 456.5 L1046.5 459.5 L1046.5 468.5 L1046.5 467.5 L1047.5 465.5 L1047.5 442.5 L1048.5 439.5 L1048.5 428.5 L1048.5 429.5 L1049.5 430.5 L1049.5 452.5 L1050.5 455.5 L1050.5 468.5 L1051.5 467.5 L1051.5 447.5 L1052.5 444.5 L1052.5 428.5 L1053.5 428.5 L1053.5 447.5 L1054.5 450.5 L1054.5 468.5 L1055.5 468.5 L1055.5 452.5 L1056.5 449.5 L1056.5 429.5 L1057.5 428.5 L1057.5 442.5 L1058.5 445.5 L1058.5 467.5 L1059.5 467.5 L1059.5 468.5 L1059.5 457.5 L1060.5 454.5 L1060.5 431.5 L1061.5 429.5 L1061.5 428.5 L1061.5 437.5 L1062.5 440.5 L1062.5 464.5 L1063.5 466.5 L1063.5 468.5 L1063.5 461.5 L1064.5 458.5 L1064.5 434.5 L1065.5 432.5 L1065.5 428.5 L1065.5 433.5 L1066.5 436.5 L1066.5 461.5 L1067.5 463.5 L1067.5 468.5 L1067.5 464.5 L1068.5 462.5 L1068.5 437.5 L1069.5 435.5 L1069.5 428.5 L1069.5 430.5 L1070.5 432.5 L1070.5 456.5 L1071.5 459.5 L1071.5 468.5 L1071.5 467.5 L1072.5 465.5 L1072.5 442.5 L1073.5 439.5 L1073.5 428.5 L1073.5 429.5 L1074.5 430.5 L1074.5 452.5 L1075.5 455.5 L1075.5 468.5 L1076.5 467.5 L1076.5 447.5 L1077.5 444.5 L1077.5 428.5 L1078.5 428.5 L1078.5 447.5 L1079.5 450.5 L1079.5 468.5 L1080.5 468.5 L1080.5 452.5 L1081.5 449.5 L1081.5 429.5 L1082.5 428.5 L1082.5 442.5 L1083.5 445.5 L1083.5 467.5 L1084.5 467.5 L1084.5 468.5 L1084.5 457.5 L1085.5 454.5 L1085.5 431.5 L1086.5 429.5 L1086.5 428.5 L1086.5 437.5 L1087.5 440.5 L1087.5 464.5 L1088.5 466.5 L1088.5 468.5 L1088.5 461.5 L1089.5 458.5 L1089.5 434.5 L1090.5 432.5 L1090.5 428.5 L1090.5 433.5 L1091.5 436.5 L1091.5 461.5 L1092.5 463.5 L1092.5 468.5 L1092.5 464.5 L1093.5 462.5 L1093.5 437.5 L1094.5 435.5 L1094.5 428.5 L1094.5 430.5 L1095.5 432.5 L1095.5 456.5 L1096.5 459.5 L1096.5 468.5 L1096.5 467.5 L1097.5 465.5 L1097.5 442.5 L1098.5 439.5 L1098.5 428.5 L1098.5 429.5 L1099.5 430.5 L1099.5 452.5 L1100.5 455.5 L1100.5 468.5 L1101.5 467.5 L1101.5 447.5 L1102.5 444.5 L1102.5 428.5 L1103.5 428.5 L1103.5 447.5 L1104.5 450.5 L1104.5 468.5 L1105.5 468.5 L1105.5 452.5 L1106.5 449.5 L1106.5 429.5 L1107.5 428.5 L1107.5 442.5 L1108.5 445.5 L1108.5 467.5 L1109.5 467.5 L1109.5 468.5 L1109.5 457.5 L1110.5 454.5 L1110.5 431.5 L1111.5 429.5 L1111.5 428.5 L1111.5 437.5 L1112.5 440.5 L1112.5 464.5 L1113.5 466.5 L1113.5 468.5 L1113.5 461.5 L1114.5 458.5 L1114.5 434.5 L1115.5 432.5 L1115.5 428.5 L1115.5 433.5 L1116.5 436.5 L1116.5 461.5 L1117.5 463.5 L1117.5 468.5 L1117.5 464.5 L1118.5 462.5 L1118.5 437.5 L1119.5 435.5 L1119.5 428.5 L1119.5 430.5 L1120.5 432.5 L1120.5 456.5 L1121.5 459.5 L1121.5 468.5 L1121.5 467.5 L1122.5 465.5 L1122.5 442.5 L1123.5 439.5 L1123.5 428.5 L1123.5 429.5 L1124.5 430.5 L1124.5 452.5 L1125.5 455.5 L1125.5 468.5 L1126.5 467.5 L1126.5 447.5 L1127.5 444.5 L1127.5 428.5 L1128.5 428.5 L1128.5 447.5 L1129.5 450.5 L1129.5 468.5 L1130.5 468.5 L1130.5 452.5 L1131.5 449.5 L1131.5 429.5 L1132.5 428.5 L1132.5 442.5 L1133.5 445.5 L1133.5 467.5 L1134.5 467.5 L1134.5 468.5 L1134.5 457.5 L1135.5 454.5 L1135.5 431.5 L1136.5 429.5 L1136.5 428.5 L1136.5 437.5 L1137.5 440.5 L1137.5 464.5 L1138.5 466.5 L1138.5 468.5 L1138.5 461.5 L1139.5 458.5 L1139.5 434.5 L1140.5 432.5 L1140.5 428.5 L1140.5 433.5 L1141.5 436.5 L1141.5 461.5 L1142.5 463.5 L1142.5 468.5 L1142.5 464.5 L1143.5 462.5 L1143.5 437.5 L1144.5 435.5 L1144.5 428.5 L1144.5 430.5 L1145.5 432.5 L1145.5 456.5 L1146.5 459.5 L1146.5 468.5 L1146.5 467.5 L1147.5 465.5 L1147.5 442.5 L1148.5 439.5 L1148.5 428.5 L1148.5 429.5 L1149.5 430.5 L1149.5 452.5 L1150.5 455.5 L1150.5 468.5 L1151.5 467.5 L1151.5 447.5 L1152.5 444.5 L1152.5 428.5 L1153.5 428.5 L1153.5 447.5 L1154.5 450.5 L1154.5 468.5 L1155.5 468.5 L1155.5 452.5 L1156.5 449.5 L1156.5 429.5 L1157.5 428.5 L1157.5 442.5 L1158.5 445.5 L1158.5 467.5 L1159.5 467.5 L1159.5 468.5 L1159.5 457.5 L1160.5 454.5 L1160.5 431.5 L1161.5 429.5 L1161.5 428.5 L1161.5 437.5 L1162.5 440.5 L1162.5 464.5 L1163.5 466.5 L1163.5 468.5 L1163.5 461.5 L1164.5 458.5 L1164.5 434.5 L1165.5 432.5 L1165.5 428.5 L1165.5 433.5 L1166.5 436.5 L1166.5 461.5 L1167.5 463.5 L1167.5 468.5 L1167.5 464.5 L1168.5 462.5 L1168.5 437.5 L1169.5 435.5 L1169.5 428.5 L1169.5 430.5 L1170.5 432.5 L1170.5 456.5 L1171.5 459.5 L1171.5 468.5 L1171.5 467.5 L1172.5 465.5 L1172.5 442.5 L1173.5 439.5 L1173.5 428.5 L1173.5 429.5 L1174.5 430.5 L1174.5 452.5 L1175.5 455.5 L1175.5 468.5 L1176.5 467.5 L1176.5 447.5 L1177.5 444.5 L1177.5 428.5 L1178.5 428.5 L1178.5 447.5 L1179.5 450.5 L1179.5 468.5 L1180.5 468.5 L1180.5 452.5 L1181.5 449.5 L1181.5 429.5 L1182.5 428.5 L1182.5 442.5 L1183.5 445.5 L1183.5 467.5 L1184.5 467.5 L1184.5 468.5 L1184.5 457.5 L1185.5 454.5 L1185.5 431.5 L1186.5 429.5 L1186.5 428.5 L1186.5 437.5 L1187.5 440.5 L1187.5 464.5 L1188.5 466.5 L1188.5 468.5 L1188.5 461.5 L1189.5 458.5 L1189.5 434.5 L1190.5 432.5 L1190.5 428.5 L1190.5 433.5 L1191.5 436.5 L1191.5 461.5 L1192.5 463.5 L1192.5 468.5 L1192.5 464.5 L1193.5 462.5 L1193.5 437.5 L1194.5 435.5 L1194.5 428.5 L1194.5 430.5 L1195.5 432.5 L1195.5 456.5 L1196.5 459.5 L1196.5 468.5 L1196.5 467.5 L1197.5 465.5 L1197.5 442.5 L1198.5 439.5 L1198.5 428.5 L1198.5 429.5 L1199.5 430.5 L1199.5 452.5 L1200.5 455.5 L1200.5 468.5 L1201.5 467.5 L1201.5 447.5 L1202.5 444.5 L1202.5 428.5 L1203.5 428.5 L1203.5 447.5 L1204.5 450.5 L1204.5 468.5 L1205.5 468.5 L1205.5 452.5 L1206.5 449.5 L1206.5 429.5 L1207.5 428.5 L1207.5 442.5 L1208.5 445.5 L1208.5 467.5 L1209.5 467.5 L1209.5 468.5 L1209.5 457.5 L1210.5 454.5 L1210.5 431.5 L1211.5 429.5 L1211.5 428.5 L1211.5 437.5 L1212.5 440.5 L1212.5 464.5 L1213.5 466.5 L1213.5 468.5 L1213.5 461.5 L1214.5 458.5 L1214.5 434.5 L1215.5 432.5 L1215.5 428.5 L1215.5 433.5 L1216.5 436.5 L1216.5 461.5 L1217.5 463.5 L1217.5 468.5 L1217.5 464.5 L1218.5 462.5 L1218.5 437.5 L1219.5 435.5 L1219.5 428.5 L1219.5 430.5 L1220.5 432.5 L1220.5 456.5 L1221.5 459.5 L1221.5 468.5 L1221.5 467.5 L1222.5 465.5 L1222.5 442.5 L1223.5 439.5 L1223.5 428.5 L1223.5 429.5 L1224.5 430.5 L1224.5 452.5 L1225.5 455.5 L1225.5 468.5 L1226.5 467.5 L1226.5 447.5 L1227.5 444.5 L1227.5 428.5 L1228.5 428.5 L1228.5 447.5 L1229.5 450.5 L1229.5 468.5 L1230.5 468.5 L1230.5 452.5 L1231.5 449.5 L1231.5 429.5 L1232.5 428.5 L1232.5 442.5 L1233.5 445.5 L1233.5 467.5 L1234.5 467.5 L1234.5 468.5 L1234.5 457.5 L1235.5 454.5 L1235.5 431.5 L1236.5 429.5 L1236.5 428.5 L1236.5 437.5 L1237.5 440.5 L1237.5 464.5 L1238.5 466.5 L1238.5 468.5 L1238.5 461.5 L1239.5 458.5 L1239.5 434.5 L1240.5 432.5 L1240.5 428.5 L1240.5 433.5 L1241.5 436.5 L1241.5 461.5 L1242.5 463.5 L1242.5 468.5 L1242.5 464.5 L1243.5 462.5 L1243.5 437.5 L1244.5 435.5 L1244.5 428.5 L1244.5 430.5 L1245.5 432.5 L1245.5 456.5 L1246.5 459.5 L1246.5 468.5 L1246.5 467.5 L1247.5 465.5 L1247.5 442.5 L1248.5 439.5 L1248.5 428.5 L1248.5 429.5 L1249.5 430.5 L1249.5 452.5 L1250.5 455.5 L1250.5 468.5 L1251.5 467.5 L1251.5 447.5 L1252.5 444.5 L1252.5 428.5 L1253.5 428.5 L1253.5 447.5 L1254.5 450.5 L1254.5 468.5 L1255.5 468.5 L1255.5 452.5 L1256.5 449.5 L1256.5 429.5 L1257.5 428.5 L1257.5 442.5 L1258.5 445.5 L1258.5 467.5 L1259.5 467.5 L1259.5 468.5 L1259.5 457.5 L1260.5 454.5 L1260.5 431.5 L1261.5 429.5 L1261.5 428.5 L1261.5 437.5 L1262.5 440.5 L1262.5 464.5 L1263.5 466.5 L1263.5 468.5 L1263.5 461.5 L1264.5 458.5 L1264.5 434.5 L1265.5 432.5 L1265.5 428.5 L1265.5 433.5 L1266.5 436.5 L1266.5 461.5 L1267.5 463.5 L1267.5 468.5 L1267.5 464.5 L1268.5 462.5 L1268.5 437.5 L1269.5 435.5 L1269.5 428.5 L1269.5 430.5 L1270.5 432.5 L1270.5 456.5 L1271.5 459.5 L1271.5 468.5 L1271.5 467.5 L1272.5 465.5 L1272.5 442.5 L1273.5 439.5 L1273.5 428.5 L1273.5 429.5 L1274.5 430.5 L1274.5 452.5 L1275.5 455.5 L1275.5 468.5 L1276.5 467.5 L1276.5 447.5 L1277.5 444.5 L1277.5 428.5 L1278.5 428.5 L1278.5 447.5 L1279.5 450.5 L1279.5 468.5 L1280.5 468.5 L1280.5 452.5 L1281.5 449.5 L1281.5 429.5 L1282.5 428.5 L1282.5 442.5 L1283.5 445.5 L1283.5 467.5 L1284.5 467.5 L1284.5 468.5 L1284.5 457.5 L1285.5 454.5 L1285.5 431.5 L1286.5 429.5 L1286.5 428.5 L1286.5 437.5 L1287.5 440.5 L1287.5 464.5 L1288.5 466.5 L1288.5 468.5 L1288.5 461.5 L1289.5 458.5 L1289.5 434.5 L1290.5 432.5 L1290.5 428.5 L1290.5 433.5 L1291.5 436.5 L1291.5 461.5 L1292.5 463.5 L1292.5 468.5 L1292.5 464.5 L1293.5 462.5 L1293.5 437.5 L1294.5 435.5 L1294.5 428.5 L1294.5 430.5 L1295.5 432.5 L1295.5 456.5 L1296.5 459.5 L1296.5 468.5 L1296.5 467.5 L1297.5 465.5 L1297.5 442.5 L1298.5 439.5 L1298.5 428.5 L1298.5 429.5 L1299.5 430.5 L1299.5 452.5 L1300.5 455.5 L1300.5 468.5 L1301.5 467.5 L1301.5 447.5 L1302.5 444.5 L1302.5 428.5 L1303.5 428.5 L1303.5 447.5 L1304.5 450.5 L1304.5 468.5 L1305.5 468.5 L1305.5 452.5 L1306.5 449.5 L1306.5 429.5 L1307.5 428.5 L1307.5 442.5 L1308.5 445.5 L1308.5 467.5 L1309.5 467.5 L1309.5 468.5 L1309.5 457.5 L1310.5 454.5 L1310.5 431.5 L1311.5 429.5 L1311.5 428.5 L1311.5 437.5 L1312.5 440.5 L1312.5 464.5 L1313.5 466.5 L1313.5 468.5 L1313.5 461.5 L1314.5 458.5 L1314.5 434.5 L1315.5 432.5 L1315.5 428.5 L1315.5 433.5 L1316.5 436.5 L1316.5 461.5 L1317.5 463.5 L1317.5 468.5 L1317.5 464.5 L1318.5 462.5 L1318.5 437.5 L1319.5 435.5 L1319.5 428.5 L1319.5 430.5 L1320.5 432.5 L1320.5 456.5 L1321.5 459.5 L1321.5 468.5 L1321.5 467.5 L1322.5 465.5 L1322.5 442.5 L1323.5 439.5 L1323.5 428.5 L1323.5 429.5 L1324.5 430.5 L1324.5 452.5 L1325.5 455.5 L1325.5 468.5 L1326.5 467.5 L1326.5 447.5 L1327.5 444.5" stroke="#ff0000" stroke-linejoin="round"/><path d="M409.5 539.5 L410.5 537.5 L411.5 536.5 L412.5 534.5 L413.5 531.5 L414.5 529.5 L415.5 526.5 L416.5 523.5 L417.5 520.5 L418.5 517.5 L419.5 514.5 L420.5 511.5 L421.5 509.5 L422.5 506.5 L423.5 504.5 L424.5 503.5 L425.5 501.5 L426.5 501.5 L427.5 500.5 L428.5 500.5 L429.5 501.5 L430.5 501.5 L431.5 503.5 L432.5 504.5 L433.5 506.5 L434.5 509.5 L435.5 511.5 L436.5 514.5 L437.5 517.5 L438.5 520.5 L439.5 523.5 L440.5 526.5 L441.5 529.5 L442.5 531.5 L443.5 534.5 L444.5 536.5 L445.5 537.5 L446.5 539.5 L447.5 540.5 L448.5 540.5 L449.5 540.5 L450.5 539.5 L451.5 538.5 L452.5 537.5 L453.5 535.5 L454.5 533.5 L455.5 531.5 L456.5 528.5 L457.5 525.5 L458.5 523.5 L459.5 520.5 L460.5 517.5 L461.5 514.5 L462.5 511.5 L463.5 508.5 L464.5 506.5 L465.5 504.5 L466.5 502.5 L467.5 501.5 L468.5 500.5 L469.5 500.5 L470.5 500.5 L471.5 501.5 L472.5 502.5 L473.5 503.5 L474.5 505.5 L475.5 507.5 L476.5 509.5 L477.5 512.5 L478.5 515.5 L479.5 518.5 L480.5 521.5 L481.5 524.5 L482.5 527.5 L483.5 529.5 L484.5 532.5 L485.5 534.5 L486.5 536.5 L487.5 538.5 L488.5 539.5 L489.5 540.5 L490.5 540.5 L491.5 540.5 L492.5 539.5 L493.5 538.5 L494.5 537.5 L495.5 535.5 L496.5 533.5 L497.5 530.5 L498.5 528.5 L499.5 525.5 L500.5 522.5 L501.5 519.5 L502.5 516.5 L503.5 513.5 L504.5 510.5 L505.5 508.5 L506.5 506.5 L507.5 504.5 L508.5 502.5 L509.5 501.5 L510.5 500.5 L511.5 500.5 L512.5 500.5 L513.5 501.5 L514.5 502.5 L515.5 503.5 L516.5 505.5 L517.5 507.5 L518.5 510.5 L519.5 513.5 L520.5 515.5 L521.5 518.5 L522.5 521.5 L523.5 524.5 L524.5 527.5 L525.5 530.5 L526.5 532.5 L527.5 535.5 L528.5 537.5 L529.5 538.5 L530.5 539.5 L531.5 540.5 L532.5 540.5 L533.5 540.5 L534.5 539.5 L535.5 538.5 L536.5 536.5 L537.5 535.5 L538.5 532.5 L539.5 530.5 L540.5 527.5 L541.5 524.5 L542.5 521.5 L543.5 518.5 L544.5 515.5 L545.5 512.5 L546.5 510.5 L547.5 507.5 L548.5 505.5 L549.5 503.5 L550.5 502.5 L551.5 501.5 L552.5 500.5 L553.5 500.5 L554.5 500.5 L555.5 501.5 L556.5 502.5 L557.5 504.5 L558.5 506.5 L559.5 508.5 L560.5 510.5 L561.5 513.5 L562.5 516.5 L563.5 519.5 L564.5 522.5 L565.5 525.5 L566.5 528.5 L567.5 531.5 L568.5 533.5 L569.5 535.5 L570.5 537.5 L571.5 538.5 L572.5 539.5 L573.5 540.5 L574.5 540.5 L575.5 540.5 L576.5 539.5 L577.5 538.5 L578.5 536.5 L579.5 534.5 L580.5 532.5 L581.5 529.5 L582.5 526.5 L583.5 524.5 L584.5 521.5 L585.5 518.5 L586.5 515.5 L587.5 512.5 L588.5 509.5 L589.5 507.5 L590.5 505.5 L591.5 503.5 L592.5 502.5 L593.5 501.5 L594.5 500.5 L595.5 500.5 L596.5 500.5 L597.5 501.5 L598.5 502.5 L599.5 504.5 L600.5 506.5 L601.5 508.5 L602.5 511.5 L603.5 514.5 L604.5 517.5 L605.5 520.5 L606.5 523.5 L607.5 526.5 L608.5 528.5 L609.5 531.5 L610.5 533.5 L611.5 536.5 L612.5 537.5 L613.5 539.5 L614.5 539.5 L615.5 540.5 L616.5 540.5 L617.5 540.5 L618.5 539.5 L619.5 537.5 L620.5 536.5 L621.5 534.5 L622.5 531.5 L623.5 529.5 L624.5 526.5 L625.5 523.5 L626.5 520.5 L627.5 517.5 L628.5 514.5 L629.5 511.5 L630.5 509.5 L631.5 506.5 L632.5 504.5 L633.5 503.5 L634.5 501.5 L635.5 500.5 L636.5 500.5 L637.5 500.5 L638.5 501.5 L639.5 501.5 L640.5 503.5 L641.5 505.5 L642.5 507.5 L643.5 509.5 L644.5 512.5 L645.5 514.5 L646.5 517.5 L647.5 520.5 L648.5 523.5 L649.5 526.5 L650.5 529.5 L651.5 532.5 L652.5 534.5 L653.5 536.5 L654.5 538.5 L655.5 539.5 L656.5 540.5 L657.5 540.5 L658.5 540.5 L659.5 539.5 L660.5 538.5 L661.5 537.5 L662.5 535.5 L663.5 533.5 L664.5 531.5 L665.5 528.5 L666.5 525.5 L667.5 522.5 L668.5 519.5 L669.5 516.5 L670.5 513.5 L671.5 511.5 L672.5 508.5 L673.5 506.5 L674.5 504.5 L675.5 502.5 L676.5 501.5 L677.5 500.5 L678.5 500.5 L679.5 500.5 L680.5 501.5 L681.5 502.5 L682.5 503.5 L683.5 505.5 L684.5 507.5 L685.5 510.5 L686.5 512.5 L687.5 515.5 L688.5 518.5 L689.5 521.5 L690.5 524.5 L691.5 527.5 L692.5 530.5 L693.5 532.5 L694.5 534.5 L695.5 536.5 L696.5 538.5 L697.5 539.5 L698.5 540.5 L699.5 540.5 L700.5 540.5 L701.5 539.5 L702.5 538.5 L703.5 537.5 L704.5 535.5 L705.5 533.5 L706.5 530.5 L707.5 528.5 L708.5 525.5 L709.5 522.5 L710.5 519.5 L711.5 516.5 L712.5 513.5 L713.5 510.5 L714.5 508.5 L715.5 505.5 L716.5 504.5 L717.5 502.5 L718.5 501.5 L719.5 500.5 L720.5 500.5 L721.5 500.5 L722.5 501.5 L723.5 502.5 L724.5 503.5 L725.5 505.5 L726.5 508.5 L727.5 510.5 L728.5 513.5 L729.5 516.5 L730.5 519.5 L731.5 522.5 L732.5 525.5 L733.5 527.5 L734.5 530.5 L735.5 533.5 L736.5 535.5 L737.5 537.5 L738.5 538.5 L739.5 539.5 L740.5 540.5 L741.5 540.5 L742.5 540.5 L743.5 539.5 L744.5 538.5 L745.5 536.5 L746.5 534.5 L747.5 532.5 L748.5 530.5 L749.5 527.5 L750.5 524.5 L751.5 521.5 L752.5 518.5 L753.5 515.5 L754.5 512.5 L755.5 510.5 L756.5 507.5 L757.5 505.5 L758.5 503.5 L759.5 502.5 L760.5 501.5 L761.5 500.5 L762.5 500.5 L763.5 500.5 L764.5 501.5 L765.5 502.5 L766.5 504.5 L767.5 506.5 L768.5 508.5 L769.5 511.5 L770.5 513.5 L771.5 516.5 L772.5 519.5 L773.5 522.5 L774.5 525.5 L775.5 528.5 L776.5 531.5 L777.5 533.5 L778.5 535.5 L779.5 537.5 L780.5 538.5 L781.5 539.5 L782.5 540.5 L783.5 540.5 L784.5 540.5 L785.5 539.5 L786.5 538.5 L787.5 536.5 L788.5 534.5 L789.5 532.5 L790.5 529.5 L791.5 526.5 L792.5 523.5 L793.5 520.5 L794.5 517.5 L795.5 514.5 L796.5 512.5 L797.5 509.5 L798.5 507.5 L799.5 505.5 L800.5 503.5 L801.5 501.5 L802.5 501.5 L803.5 500.5 L804.5 500.5 L805.5 500.5 L806.5 501.5 L807.5 503.5 L808.5 504.5 L809.5 506.5 L810.5 509.5 L811.5 511.5 L812.5 514.5 L813.5 517.5 L814.5 520.5 L815.5 523.5 L816.5 526.5 L817.5 529.5 L818.5 531.5 L819.5 534.5 L820.5 536.5 L821.5 537.5 L822.5 539.5 L823.5 540.5 L824.5 540.5 L825.5 540.5 L826.5 539.5 L827.5 539.5 L828.5 537.5 L829.5 536.5 L830.5 533.5 L831.5 531.5 L832.5 529.5 L833.5 526.5 L834.5 523.5 L835.5 520.5 L836.5 517.5 L837.5 514.5 L838.5 511.5 L839.5 508.5 L840.5 506.5 L841.5 504.5 L842.5 503.5 L843.5 501.5 L844.5 500.5 L845.5 500.5 L846.5 500.5 L847.5 501.5 L848.5 502.5 L849.5 503.5 L850.5 505.5 L851.5 507.5 L852.5 509.5 L853.5 512.5 L854.5 515.5 L855.5 518.5 L856.5 521.5 L857.5 524.5 L858.5 526.5 L859.5 529.5 L860.5 532.5 L861.5 534.5 L862.5 536.5 L863.5 538.5 L864.5 539.5 L865.5 540.5 L866.5 540.5 L867.5 540.5 L868.5 539.5 L869.5 538.5 L870.5 537.5 L871.5 535.5 L872.5 533.5 L873.5 531.5 L874.5 528.5 L875.5 525.5 L876.5 522.5 L877.5 519.5 L878.5 516.5 L879.5 513.5 L880.5 511.5 L881.5 508.5 L882.5 506.5 L883.5 504.5 L884.5 502.5 L885.5 501.5 L886.5 500.5 L887.5 500.5 L888.5 500.5 L889.5 501.5 L890.5 502.5 L891.5 503.5 L892.5 505.5 L893.5 507.5 L894.5 510.5 L895.5 512.5 L896.5 515.5 L897.5 518.5 L898.5 521.5 L899.5 524.5 L900.5 527.5 L901.5 530.5 L902.5 532.5 L903.5 535.5 L904.5 536.5 L905.5 538.5 L906.5 539.5 L907.5 540.5 L908.5 540.5 L908.5 531.5 L908.5 539.5 L909.5 539.5 L909.5 540.5 L909.5 529.5 L910.5 526.5 L910.5 503.5 L911.5 501.5 L911.5 500.5 L911.5 509.5 L912.5 512.5 L912.5 536.5 L913.5 538.5 L913.5 540.5 L913.5 533.5 L914.5 530.5 L914.5 506.5 L915.5 504.5 L915.5 500.5 L915.5 505.5 L916.5 508.5 L916.5 533.5 L917.5 535.5 L917.5 540.5 L917.5 536.5 L918.5 534.5 L918.5 509.5 L919.5 507.5 L919.5 500.5 L919.5 502.5 L920.5 504.5 L920.5 528.5 L921.5 531.5 L921.5 540.5 L921.5 539.5 L922.5 537.5 L922.5 514.5 L923.5 511.5 L923.5 500.5 L923.5 501.5 L924.5 502.5 L924.5 524.5 L925.5 527.5 L925.5 540.5 L926.5 539.5 L926.5 519.5 L927.5 516.5 L927.5 500.5 L928.5 500.5 L928.5 519.5 L929.5 522.5 L929.5 540.5 L930.5 540.5 L930.5 524.5 L931.5 521.5 L931.5 501.5 L932.5 500.5 L932.5 514.5 L933.5 517.5 L933.5 539.5 L934.5 539.5 L934.5 540.5 L934.5 529.5 L935.5 526.5 L935.5 503.5 L936.5 501.5 L936.5 500.5 L936.5 509.5 L937.5 512.5 L937.5 536.5 L938.5 538.5 L938.5 540.5 L938.5 533.5 L939.5 530.5 L939.5 506.5 L940.5 504.5 L940.5 500.5 L940.5 505.5 L941.5 508.5 L941.5 533.5 L942.5 535.5 L942.5 540.5 L942.5 536.5 L943.5 534.5 L943.5 509.5 L944.5 507.5 L944.5 500.5 L944.5 502.5 L945.5 504.5 L945.5 528.5 L946.5 531.5 L946.5 540.5 L946.5 539.5 L947.5 537.5 L947.5 514.5 L948.5 511.5 L948.5 500.5 L948.5 501.5 L949.5 502.5 L949.5 524.5 L950.5 527.5 L950.5 540.5 L951.5 539.5 L951.5 519.5 L952.5 516.5 L952.5 500.5 L953.5 500.5 L953.5 519.5 L954.5 522.5 L954.5 540.5 L955.5 540.5 L955.5 524.5 L956.5 521.5 L956.5 501.5 L957.5 500.5 L957.5 514.5 L958.5 517.5 L958.5 539.5 L959.5 539.5 L959.5 540.5 L959.5 529.5 L960.5 526.5 L960.5 503.5 L961.5 501.5 L961.5 500.5 L961.5 509.5 L962.5 512.5 L962.5 536.5 L963.5 538.5 L963.5 540.5 L963.5 533.5 L964.5 530.5 L964.5 506.5 L965.5 504.5 L965.5 500.5 L965.5 505.5 L966.5 508.5 L966.5 533.5 L967.5 535.5 L967.5 540.5 L967.5 536.5 L968.5 534.5 L968.5 509.5 L969.5 507.5 L969.5 500.5 L969.5 502.5 L970.5 504.5 L970.5 528.5 L971.5 531.5 L971.5 540.5 L971.5 539.5 L972.5 537.5 L972.5 514.5 L973.5 511.5 L973.5 500.5 L973.5 501.5 L974.5 502.5 L974.5 524.5 L975.5 527.5 L975.5 540.5 L976.5 539.5 L976.5 519.5 L977.5 516.5 L977.5 500.5 L978.5 500.5 L978.5 519.5 L979.5 522.5 L979.5 540.5 L980.5 540.5 L980.5 524.5 L981.5 521.5 L981.5 501.5 L982.5 500.5 L982.5 514.5 L983.5 517.5 L983.5 539.5 L984.5 539.5 L984.5 540.5 L984.5 529.5 L985.5 526.5 L985.5 503.5 L986.5 501.5 L986.5 500.5 L986.5 509.5 L987.5 512.5 L987.5 536.5 L988.5 538.5 L988.5 540.5 L988.5 533.5 L989.5 530.5 L989.5 506.5 L990.5 504.5 L990.5 500.5 L990.5 505.5 L991.5 508.5 L991.5 533.5 L992.5 535.5 L992.5 540.5 L992.5 536.5 L993.5 534.5 L993.5 509.5 L994.5 507.5 L994.5 500.5 L994.5 502.5 L995.5 504.5 L995.5 528.5 L996.5 531.5 L996.5 540.5 L996.5 539.5 L997.5 537.5 L997.5 514.5 L998.5 511.5 L998.5 500.5 L998.5 501.5 L999.5 502.5 L999.5 524.5 L1000.5 527.5 L1000.5 540.5 L1001.5 539.5 L1001.5 519.5 L1002.5 516.5 L1002.5 500.5 L1003.5 500.5 L1003.5 519.5 L1004.5 522.5 L1004.5 540.5 L1005.5 540.5 L1005.5 524.5 L1006.5 521.5 L1006.5 501.5 L1007.5 500.5 L1007.5 514.5 L1008.5 517.5 L1008.5 539.5 L1009.5 539.5 L1009.5 540.5 L1009.5 529.5 L1010.5 526.5 L1010.5 503.5 L1011.5 501.5 L1011.5 500.5 L1011.5 509.5 L1012.5 512.5 L1012.5 536.5 L1013.5 538.5 L1013.5 540.5 L1013.5 533.5 L1014.5 530.5 L1014.5 506.5 L1015.5 504.5 L1015.5 500.5 L1015.5 505.5 L1016.5 508.5 L1016.5 533.5 L1017.5 535.5 L1017.5 540.5 L1017.5 536.5 L1018.5 534.5 L1018.5 509.5 L1019.5 507.5 L1019.5 500.5 L1019.5 502.5 L1020.5 504.5 L1020.5 528.5 L1021.5 531.5 L1021.5 540.5 L1021.5 539.5 L1022.5 537.5 L1022.5 514.5 L1023.5 511.5 L1023.5 500.5 L1023.5 501.5 L1024.5 502.5 L1024.5 524.5 L1025.5 527.5 L1025.5 540.5 L1026.5 539.5 L1026.5 519.5 L1027.5 516.5 L1027.5 500.5 L1028.5 500.5 L1028.5 519.5 L1029.5 522.5 L1029.5 540.5 L1030.5 540.5 L1030.5 524.5 L1031.5 521.5 L1031.5 501.5 L1032.5 500.5 L1032.5 514.5 L1033.5 517.5 L1033.5 539.5 L1034.5 539.5 L1034.5 540.5 L1034.5 529.5 L1035.5 526.5 L1035.5 503.5 L1036.5 501.5 L1036.5 500.5 L1036.5 509.5 L1037.5 512.5 L1037.5 536.5 L1038.5 538.5 L1038.5 540.5 L1038.5 533.5 L1039.5 530.5 L1039.5 506.5 L1040.5 504.5 L1040.5 500.5 L1040.5 505.5 L1041.5 508.5 L1041.5 533.5 L1042.5 535.5 L1042.5 540.5 L1042.5 536.5 L1043.5 534.5 L1043.5 509.5 L1044.5 507.5 L1044.5 500.5 L1044.5 502.5 L1045.5 504.5 L1045.5 528.5 L1046.5 531.5 L1046.5 540.5 L1046.5 539.5 L1047.5 537.5 L1047.5 514.5 L1048.5 511.5 L1048.5 500.5 L1048.5 501.5 L1049.5 502.5 L1049.5 524.5 L1050.5 527.5 L1050.5 540.5 L1051.5 539.5 L1051.5 519.5 L1052.5 516.5 L1052.5 500.5 L1053.5 500.5 L1053.5 519.5 L1054.5 522.5 L1054.5 540.5 L1055.5 540.5 L1055.5 524.5 L1056.5 521.5 L1056.5 501.5 L1057.5 500.5 L1057.5 514.5 L1058.5 517.5 L1058.5 539.5 L1059.5 539.5 L1059.5 540.5 L1059.5 529.5 L1060.5 526.5 L1060.5 503.5 L1061.5 501.5 L1061.5 500.5 L1061.5 509.5 L1062.5 512.5 L1062.5 536.5 L1063.5 538.5 L1063.5 540.5 L1063.5 533.5 L1064.5 530.5 L1064.5 506.5 L1065.5 504.5 L1065.5 500.5 L1065.5 505.5 L1066.5 508.5 L1066.5 533.5 L1067.5 535.5 L1067.5 540.5 L1067.5 536.5 L1068.5 534.5 L1068.5 509.5 L1069.5 507.5 L1069.5 500.5 L1069.5 502.5 L1070.5 504.5 L1070.5 528.5 L1071.5 531.5 L1071.5 540.5 L1071.5 539.5 L1072.5 537.5 L1072.5 514.5 L1073.5 511.5 L1073.5 500.5 L1073.5 501.5 L1074.5 502.5 L1074.5 524.5 L1075.5 527.5 L1075.5 540.5 L1076.5 539.5 L1076.5 519.5 L1077.5 516.5 L1077.5 500.5 L1078.5 500.5 L1078.5 519.5 L1079.5 522.5 L1079.5 540.5 L1080.5 540.5 L1080.5 524.5 L1081.5 521.5 L1081.5 501.5 L1082.5 500.5 L1082.5 514.5 L1083.5 517.5 L1083.5 539.5 L1084.5 539.5 L1084.5 540.5 L1084.5 529.5 L1085.5 526.5 L1085.5 503.5 L1086.5 501.5 L1086.5 500.5 L1086.5 509.5 L1087.5 512.5 L1087.5 536.5 L1088.5 538.5 L1088.5 540.5 L1088.5 533.5 L1089.5 530.5 L1089.5 506.5 L1090.5 504.5 L1090.5 500.5 L1090.5 505.5 L1091.5 508.5 L1091.5 533.5 L1092.5 535.5 L1092.5 540.5 L1092.5 536.5 L1093.5 534.5 L1093.5 509.5 L1094.5 507.5 L1094.5 500.5 L1094.5 502.5 L1095.5 504.5 L1095.5 528.5 L1096.5 531.5 L1096.5 540.5 L1096.5 539.5 L1097.5 537.5 L1097.5 514.5 L1098.5 511.5 L1098.5 500.5 L1098.5 501.5 L1099.5 502.5 L1099.5 524.5 L1100.5 527.5 L1100.5 540.5 L1101.5 539.5 L1101.5 519.5 L1102.5 516.5 L1102.5 500.5 L1103.5 500.5 L1103.5 519.5 L1104.5 522.5 L1104.5 540.5 L1105.5 540.5 L1105.5 524.5 L1106.5 521.5 L1106.5 501.5 L1107.5 500.5 L1107.5 514.5 L1108.5 517.5 L1108.5 539.5 L1109.5 539.5 L1109.5 540.5 L1109.5 529.5 L1110.5 526.5 L1110.5 503.5 L1111.5 501.5 L1111.5 500.5 L1111.5 509.5 L1112.5 512.5 L1112.5 536.5 L1113.5 538.5 L1113.5 540.5 L1113.5 533.5 L1114.5 530.5 L1114.5 506.5 L1115.5 504.5 L1115.5 500.5 L1115.5 505.5 L1116.5 508.5 L1116.5 533.5 L1117.5 535.5 L1117.5 540.5 L1117.5 536.5 L1118.5 534.5 L1118.5 509.5 L1119.5 507.5 L1119.5 500.5 L1119.5 502.5 L1120.5 504.5 L1120.5 528.5 L1121.5 531.5 L1121.5 540.5 L1121.5 539.5 L1122.5 537.5 L1122.5 514.5 L1123.5 511.5 L1123.5 500.5 L1123.5 501.5 L1124.5 502.5 L1124.5 524.5 L1125.5 527.5 L1125.5 540.5 L1126.5 539.5 L1126.5 519.5 L1127.5 516.5 L1127.5 500.5 L1128.5 500.5 L1128.5 519.5 L1129.5 522.5 L1129.5 540.5 L1130.5 540.5 L1130.5 524.5 L1131.5 521.5 L1131.5 501.5 L1132.5 500.5 L1132.5 514.5 L1133.5 517.5 L1133.5 539.5 L1134.5 539.5 L1134.5 540.5 L1134.5 529.5 L1135.5 526.5 L1135.5 503.5 L1136.5 501.5 L1136.5 500.5 L1136.5 509.5 L1137.5 512.5 L1137.5 536.5 L1138.5 538.5 L1138.5 540.5 L1138.5 533.5 L1139.5 530.5 L1139.5 506.5 L1140.5 504.5 L1140.5 500.5 L1140.5 505.5 L1141.5 508.5 L1141.5 533.5 L1142.5 535.5 L1142.5 540.5 L1142.5 536.5 L1143.5 534.5 L1143.5 509.5 L1144.5 507.5 L1144.5 500.5 L1144.5 502.5 L1145.5 504.5 L1145.5 528.5 L1146.5 531.5 L1146.5 540.5 L1146.5 539.5 L1147.5 537.5 L1147.5 514.5 L1148.5 511.5 L1148.5 500.5 L1148.5 501.5 L1149.5 502.5 L1149.5 524.5 L1150.5 527.5 L1150.5 540.5 L1151.5 539.5 L1151.5 519.5 L1152.5 516.5 L1152.5 500.5 L1153.5 500.5 L1153.5 519.5 L1154.5 522.5 L1154.5 540.5 L1155.5 540.5 L1155.5 524.5 L1156.5 521.5 L1156.5 501.5 L1157.5 500.5 L1157.5 514.5 L1158.5 517.5 L1158.5 539.5 L1159.5 539.5 L1159.5 540.5 L1159.5 529.5 L1160.5 526.5 L1160.5 503.5 L1161.5 501.5 L1161.5 500.5 L1161.5 509.5 L1162.5 512.5 L1162.5 536.5 L1163.5 538.5 L1163.5 540.5 L1163.5 533.5 L1164.5 530.5 L1164.5 506.5 L1165.5 504.5 L1165.5 500.5 L1165.5 505.5 L1166.5 508.5 L1166.5 533.5 L1167.5 535.5 L1167.5 540.5 L1167.5 536.5 L1168.5 534.5 L1168.5 509.5 L1169.5 507.5 L1169.5 500.5 L1169.5 502.5 L1170.5 504.5 L1170.5 528.5 L1171.5 531.5 L1171.5 540.5 L1171.5 539.5 L1172.5 537.5 L1172.5 514.5 L1173.5 511.5 L1173.5 500.5 L1173.5 501.5 L1174.5 502.5 L1174.5 524.5 L1175.5 527.5 L1175.5 540.5 L1176.5 539.5 L1176.5 519.5 L1177.5 516.5 L1177.5 500.5 L1178.5 500.5 L1178.5 519.5 L1179.5 522.5 L1179.5 540.5 L1180.5 540.5 L1180.5 524.5 L1181.5 521.5 L1181.5 501.5 L1182.5 500.5 L1182.5 514.5 L1183.5 517.5 L1183.5 539.5 L1184.5 539.5 L1184.5 540.5 L1184.5 529.5 L1185.5 526.5 L1185.5 503.5 L1186.5 501.5 L1186.5 500.5 L1186.5 509.5 L1187.5 512.5 L1187.5 536.5 L1188.5 538.5 L1188.5 540.5 L1188.5 533.5 L1189.5 530.5 L1189.5 506.5 L1190.5 504.5 L1190.5 500.5 L1190.5 505.5 L1191.5 508.5 L1191.5 533.5 L1192.5 535.5 L1192.5 540.5 L1192.5 536.5 L1193.5 534.5 L1193.5 509.5 L1194.5 507.5 L1194.5 500.5 L1194.5 502.5 L1195.5 504.5 L1195.5 528.5 L1196.5 531.5 L1196.5 540.5 L1196.5 539.5 L1197.5 537.5 L1197.5 514.5 L1198.5 511.5 L1198.5 500.5 L1198.5 501.5 L1199.5 502.5 L1199.5 524.5 L1200.5 527.5 L1200.5 540.5 L1201.5 539.5 L1201.5 519.5 L1202.5 516.5 L1202.5 500.5 L1203.5 500.5 L1203.5 519.5 L1204.5 522.5 L1204.5 540.5 L1205.5 540.5 L1205.5 524.5 L1206.5 521.5 L1206.5 501.5 L1207.5 500.5 L1207.5 514.5 L1208.5 517.5 L1208.5 539.5 L1209.5 539.5 L1209.5 540.5 L1209.5 529.5 L1210.5 526.5 L1210.5 503.5 L1211.5 501.5 L1211.5 500.5 L1211.5 509.5 L1212.5 512.5 L1212.5 536.5 L1213.5 538.5 L1213.5 540.5 L1213.5 533.5 L1214.5 530.5 L1214.5 506.5 L1215.5 504.5 L1215.5 500.5 L1215.5 505.5 L1216.5 508.5 L1216.5 533.5 L1217.5 535.5 L1217.5 540.5 L1217.5 536.5 L1218.5 534.5 L1218.5 509.5 L1219.5 507.5 L1219.5 500.5 L1219.5 502.5 L1220.5 504.5 L1220.5 528.5 L1221.5 531.5 L1221.5 540.5 L1221.5 539.5 L1222.5 537.5 L1222.5 514.5 L1223.5 511.5 L1223.5 500.5 L1223.5 501.5 L1224.5 502.5 L1224.5 524.5 L1225.5 527.5 L1225.5 540.5 L1226.5 539.5 L1226.5 519.5 L1227.5 516.5 L1227.5 500.5 L1228.5 500.5 L1228.5 519.5 L1229.5 522.5 L1229.5 540.5 L1230.5 540.5 L1230.5 524.5 L1231.5 521.5 L1231.5 501.5 L1232.5 500.5 L1232.5 514.5 L1233.5 517.5 L1233.5 539.5 L1234.5 539.5 L1234.5 540.5 L1234.5 529.5 L1235.5 526.5 L1235.5 503.5 L1236.5 501.5 L1236.5 500.5 L1236.5 509.5 L1237.5 512.5 L1237.5 536.5 L1238.5 538.5 L1238.5 540.5 L1238.5 533.5 L1239.5 530.5 L1239.5 506.5 L1240.5 504.5 L1240.5 500.5 L1240.5 505.5 L1241.5 508.5 L1241.5 533.5 L1242.5 535.5 L1242.5 540.5 L1242.5 536.5 L1243.5 534.5 L1243.5 509.5 L1244.5 507.5 L1244.5 500.5 L1244.5 502.5 L1245.5 504.5 L1245.5 528.5 L1246.5 531.5 L1246.5 540.5 L1246.5 539.5 L1247.5 537.5 L1247.5 514.5 L1248.5 511.5 L1248.5 500.5 L1248.5 501.5 L1249.5 502.5 L1249.5 524.5 L1250.5 527.5 L1250.5 540.5 L1251.5 539.5 L1251.5 519.5 L1252.5 516.5 L1252.5 500.5 L1253.5 500.5 L1253.5 519.5 L1254.5 522.5 L1254.5 540.5 L1255.5 540.5 L1255.5 524.5 L1256.5 521.5 L1256.5 501.5 L1257.5 500.5 L1257.5 514.5 L1258.5 517.5 L1258.5 539.5 L1259.5 539.5 L1259.5 540.5 L1259.5 529.5 L1260.5 526.5 L1260.5 503.5 L1261.5 501.5 L1261.5 500.5 L1261.5 509.5 L1262.5 512.5 L1262.5 536.5 L1263.5 538.5 L1263.5 540.5 L1263.5 533.5 L1264.5 530.5 L1264.5 506.5 L1265.5 504.5 L1265.5 500.5 L1265.5 505.5 L1266.5 508.5 L1266.5 533.5 L1267.5 535.5 L1267.5 540.5 L1267.5 536.5 L1268.5 534.5 L1268.5 509.5 L1269.5 507.5 L1269.5 500.5 L1269.5 502.5 L1270.5 504.5 L1270.5 528.5 L1271.5 531.5 L1271.5 540.5 L1271.5 539.5 L1272.5 537.5 L1272.5 514.5 L1273.5 511.5 L1273.5 500.5 L1273.5 501.5 L1274.5 502.5 L1274.5 524.5 L1275.5 527.5 L1275.5 540.5 L1276.5 539.5 L1276.5 519.5 L1277.5 516.5 L1277.5 500.5 L1278.5 500.5 L1278.5 519.5 L1279.5 522.5 L1279.5 540.5 L1280.5 540.5 L1280.5 524.5 L1281.5 521.5 L1281.5 501.5 L1282.5 500.5 L1282.5 514.5 L1283.5 517.5 L1283.5 539.5 L1284.5 539.5 L1284.5 540.5 L1284.5 529.5 L1285.5 526.5 L1285.5 503.5 L1286.5 501.5 L1286.5 500.5 L1286.5 509.5 L1287.5 512.5 L1287.5 536.5 L1288.5 538.5 L1288.5 540.5 L1288.5 533.5 L1289.5 530.5 L1289.5 506.5 L1290.5 504.5 L1290.5 500.5 L1290.5 505.5 L1291.5 508.5 L1291.5 533.5 L1292.5 535.5 L1292.5 540.5 L1292.5 536.5 L1293.5 534.5 L1293.5 509.5 L1294.5 507.5 L1294.5 500.5 L1294.5 502.5 L1295.5 504.5 L1295.5 528.5 L1296.5 531.5 L1296.5 540.5 L1296.5 539.5 L1297.5 537.5 L1297.5 514.5 L1298.5 511.5 L1298.5 500.5 L1298.5 501.5 L1299.5 502.5 L1299.5 524.5 L1300.5 527.5 L1300.5 540.5 L1301.5 539.5 L1301.5 519.5 L1302.5 516.5 L1302.5 500.5 L1303.5 500.5 L1303.5 519.5 L1304.5 522.5 L1304.5 540.5 L1305.5 540.5 L1305.5 524.5 L1306.5 521.5 L1306.5 501.5 L1307.5 500.5 L1307.5 514.5 L1308.5 517.5 L1308.5 539.5 L1309.5 539.5 L1309.5 540.5 L1309.5 529.5 L1310.5 526.5 L1310.5 503.5 L1311.5 501.5 L1311.5 500.5 L1311.5 509.5 L1312.5 512.5 L1312.5 536.5 L1313.5 538.5 L1313.5 540.5 L1313.5 533.5 L1314.5 530.5 L1314.5 506.5 L1315.5 504.5 L1315.5 500.5 L1315.5 505.5 L1316.5 508.5 L1316.5 533.5 L1317.5 535.5 L1317.5 540.5 L1317.5 536.5 L1318.5 534.5 L1318.5 509.5 L1319.5 507.5 L1319.5 500.5 L1319.5 502.5 L1320.5 504.5 L1320.5 528.5 L1321.5 531.5 L1321.5 540.5 L1321.5 539.5 L1322.5 537.5 L1322.5 514.5 L1323.5 511.5 L1323.5 500.5 L1323.5 501.5 L1324.5 502.5 L1324.5 524.5 L1325.5 527.5 L1325.5 540.5 L1326.5 539.5 L1326.5 519.5 L1327.5 516.5" stroke="#c8c800" stroke-linejoin="round"/><path d="M409.5 611.5 L410.5 609.5 L411.5 608.5 L412.5 606.5 L413.5 603.5 L414.5 601.5 L415.5 598.5 L416.5 595.5 L417.5 592.5 L418.5 589.5 L419.5 586.5 L420.5 583.5 L421.5 581.5 L422.5 578.5 L423.5 576.5 L424.5 575.5 L425.5 573.5 L426.5 573.5 L427.5 572.5 L428.5 572.5 L429.5 573.5 L430.5 573.5 L431.5 575.5 L432.5 576.5 L433.5 578.5 L434.5 581.5 L435.5 583.5 L436.5 586.5 L437.5 589.5 L438.5 592.5 L439.5 595.5 L440.5 598.5 L441.5 601.5 L442.5 603.5 L443.5 606.5 L444.5 608.5 L445.5 609.5 L446.5 611.5 L447.5 612.5 L448.5 612.5 L449.5 612.5 L450.5 611.5 L451.5 610.5 L452.5 609.5 L453.5 607.5 L454.5 605.5 L455.5 603.5 L456.5 600.5 L457.5 597.5 L458.5 595.5 L459.5 592.5 L460.5 589.5 L461.5 586.5 L462.5 583.5 L463.5 580.5 L464.5 578.5 L465.5 576.5 L466.5 574.5 L467.5 573.5 L468.5 572.5 L469.5 572.5 L470.5 572.5 L471.5 573.5 L472.5 574.5 L473.5 575.5 L474.5 577.5 L475.5 579.5 L476.5 581.5 L477.5 584.5 L478.5 587.5 L479.5 590.5 L480.5 593.5 L481.5 596.5 L482.5 599.5 L483.5 601.5 L484.5 604.5 L485.5 606.5 L486.5 608.5 L487.5 610.5 L488.5 611.5 L489.5 612.5 L490.5 612.5 L491.5 612.5 L492.5 611.5 L493.5 610.5 L494.5 609.5 L495.5 607.5 L496.5 605.5 L497.5 602.5 L498.5 600.5 L499.5 597.5 L500.5 594.5 L501.5 591.5 L502.5 588.5 L503.5 585.5 L504.5 582.5 L505.5 580.5 L506.5 578.5 L507.5 576.5 L508.5 574.5 L509.5 573.5 L510.5 572.5 L511.5 572.5 L512.5 572.5 L513.5 573.5 L514.5 574.5 L515.5 575.5 L516.5 577.5 L517.5 579.5 L518.5 582.5 L519.5 585.5 L520.5 587.5 L521.5 590.5 L522.5 593.5 L523.5 596.5 L524.5 599.5 L525.5 602.5 L526.5 604.5 L527.5 607.5 L528.5 609.5 L529.5 610.5 L530.5 611.5 L531.5 612.5 L532.5 612.5 L533.5 612.5 L534.5 611.5 L535.5 610.5 L536.5 608.5 L537.5 607.5 L538.5 604.5 L539.5 602.5 L540.5 599.5 L541.5 596.5 L542.5 593.5 L543.5 590.5 L544.5 587.5 L545.5 584.5 L546.5 582.5 L547.5 579.5 L548.5 577.5 L549.5 575.5 L550.5 574.5 L551.5 573.5 L552.5 572.5 L553.5 572.5 L554.5 572.5 L555.5 573.5 L556.5 574.5 L557.5 576.5 L558.5 578.5 L559.5 580.5 L560.5 582.5 L561.5 585.5 L562.5 588.5 L563.5 591.5 L564.5 594.5 L565.5 597.5 L566.5 600.5 L567.5 603.5 L568.5 605.5 L569.5 607.5 L570.5 609.5 L571.5 610.5 L572.5 611.5 L573.5 612.5 L574.5 612.5 L575.5 612.5 L576.5 611.5 L577.5 610.5 L578.5 608.5 L579.5 606.5 L580.5 604.5 L581.5 601.5 L582.5 598.5 L583.5 596.5 L584.5 593.5 L585.5 590.5 L586.5 587.5 L587.5 584.5 L588.5 581.5 L589.5 579.5 L590.5 577.5 L591.5 575.5 L592.5 574.5 L593.5 573.5 L594.5 572.5 L595.5 572.5 L596.5 572.5 L597.5 573.5 L598.5 574.5 L599.5 576.5 L600.5 578.5 L601.5 580.5 L602.5 583.5 L603.5 586.5 L604.5 589.5 L605.5 592.5 L606.5 595.5 L607.5 598.5 L608.5 600.5 L609.5 603.5 L610.5 605.5 L611.5 608.5 L612.5 609.5 L613.5 611.5 L614.5 611.5 L615.5 612.5 L616.5 612.5 L617.5 612.5 L618.5 611.5 L619.5 609.5 L620.5 608.5 L621.5 606.5 L622.5 603.5 L623.5 601.5 L624.5 598.5 L625.5 595.5 L626.5 592.5 L627.5 589.5 L628.5 586.5 L629.5 583.5 L630.5 581.5 L631.5 578.5 L632.5 576.5 L633.5 575.5 L634.5 573.5 L635.5 572.5 L636.5 572.5 L637.5 572.5 L638.5 573.5 L639.5 573.5 L640.5 575.5 L641.5 577.5 L642.5 579.5 L643.5 581.5 L644.5 584.5 L645.5 586.5 L646.5 589.5 L647.5 592.5 L648.5 595.5 L649.5 598.5 L650.5 601.5 L651.5 604.5 L652.5 606.5 L653.5 608.5 L654.5 610.5 L655.5 611.5 L656.5 612.5 L657.5 612.5 L658.5 612.5 L659.5 611.5 L660.5 610.5 L661.5 609.5 L662.5 607.5 L663.5 605.5 L664.5 603.5 L665.5 600.5 L666.5 597.5 L667.5 594.5 L668.5 591.5 L669.5 588.5 L670.5 585.5 L671.5 583.5 L672.5 580.5 L673.5 578.5 L674.5 576.5 L675.5 574.5 L676.5 573.5 L677.5 572.5 L678.5 572.5 L679.5 572.5 L680.5 573.5 L681.5 574.5 L682.5 575.5 L683.5 577.5 L684.5 579.5 L685.5 582.5 L686.5 584.5 L687.5 587.5 L688.5 590.5 L689.5 593.5 L690.5 596.5 L691.5 599.5 L692.5 602.5 L693.5 604.5 L694.5 606.5 L695.5 608.5 L696.5 610.5 L697.5 611.5 L698.5 612.5 L699.5 612.5 L700.5 612.5 L701.5 611.5 L702.5 610.5 L703.5 609.5 L704.5 607.5 L705.5 605.5 L706.5 602.5 L707.5 600.5 L708.5 597.5 L709.5 594.5 L710.5 591.5 L711.5 588.5 L712.5 585.5 L713.5 582.5 L714.5 580.5 L715.5 577.5 L716.5 576.5 L717.5 574.5 L718.5 573.5 L719.5 572.5 L720.5 572.5 L721.5 572.5 L722.5 573.5 L723.5 574.5 L724.5 575.5 L725.5 577.5 L726.5 580.5 L727.5 582.5 L728.5 585.5 L729.5 588.5 L730.5 591.5 L731.5 594.5 L732.5 597.5 L733.5 599.5 L734.5 602.5 L735.5 605.5 L736.5 607.5 L737.5 609.5 L738.5 610.5 L739.5 611.5 L740.5 612.5 L741.5 612.5 L742.5 612.5 L743.5 611.5 L744.5 610.5 L745.5 608.5 L746.5 606.5 L747.5 604.5 L748.5 602.5 L749.5 599.5 L750.5 596.5 L751.5 593.5 L752.5 590.5 L753.5 587.5 L754.5 584.5 L755.5 582.5 L756.5 579.5 L757.5 577.5 L758.5 575.5 L759.5 574.5 L760.5 573.5 L761.5 572.5 L762.5 572.5 L763.5 572.5 L764.5 573.5 L765.5 574.5 L766.5 576.5 L767.5 578.5 L768.5 580.5 L769.5 583.5 L770.5 585.5 L771.5 588.5 L772.5 591.5 L773.5 594.5 L774.5 597.5 L775.5 600.5 L776.5 603.5 L777.5 605.5 L778.5 607.5 L779.5 609.5 L780.5 610.5 L781.5 611.5 L782.5 612.5 L783.5 612.5 L784.5 612.5 L785.5 611.5 L786.5 610.5 L787.5 608.5 L788.5 606.5 L789.5 604.5 L790.5 601.5 L791.5 598.5 L792.5 595.5 L793.5 592.5 L794.5 589.5 L795.5 586.5 L796.5 584.5 L797.5 581.5 L798.5 579.5 L799.5 577.5 L800.5 575.5 L801.5 573.5 L802.5 573.5 L803.5 572.5 L804.5 572.5 L805.5 572.5 L806.5 573.5 L807.5 575.5 L808.5 576.5 L809.5 578.5 L810.5 581.5 L811.5 583.5 L812.5 586.5 L813.5 589.5 L814.5 592.5 L815.5 595.5 L816.5 598.5 L817.5 601.5 L818.5 603.5 L819.5 606.5 L820.5 608.5 L821.5 609.5 L822.5 611.5 L823.5 612.5 L824.5 612.5 L825.5 612.5 L826.5 611.5 L827.5 611.5 L828.5 609.5 L829.5 608.5 L830.5 605.5 L831.5 603.5 L832.5 601.5 L833.5 598.5 L834.5 595.5 L835.5 592.5 L836.5 589.5 L837.5 586.5 L838.5 583.5 L839.5 580.5 L840.5 578.5 L841.5 576.5 L842.5 575.5 L843.5 573.5 L844.5 572.5 L845.5 572.5 L846.5 572.5 L847.5 573.5 L848.5 574.5 L849.5 575.5 L850.5 577.5 L851.5 579.5 L852.5 581.5 L853.5 584.5 L854.5 587.5 L855.5 590.5 L856.5 593.5 L857.5 596.5 L858.5 598.5 L859.5 601.5 L860.5 604.5 L861.5 606.5 L862.5 608.5 L863.5 610.5 L864.5 611.5 L865.5 612.5 L866.5 612.5 L867.5 612.5 L868.5 611.5 L869.5 610.5 L870.5 609.5 L871.5 607.5 L872.5 605.5 L873.5 603.5 L874.5 600.5 L875.5 597.5 L876.5 594.5 L877.5 591.5 L878.5 588.5 L879.5 585.5 L880.5 583.5 L881.5 580.5 L882.5 578.5 L883.5 576.5 L884.5 574.5 L885.5 573.5 L886.5 572.5 L887.5 572.5 L888.5 572.5 L889.5 573.5 L890.5 574.5 L891.5 575.5 L892.5 577.5 L893.5 579.5 L894.5 582.5 L895.5 584.5 L896.5 587.5 L897.5 590.5 L898.5 593.5 L899.5 596.5 L900.5 599.5 L901.5 602.5 L902.5 604.5 L903.5 607.5 L904.5 608.5 L905.5 610.5 L906.5 611.5 L907.5 612.5 L908.5 612.5 L908.5 603.5 L908.5 611.5 L909.5 611.5 L909.5 612.5 L909.5 601.5 L910.5 598.5 L910.5 575.5 L911.5 573.5 L911.5 572.5 L911.5 581.5 L912.5 584.5 L912.5 608.5 L913.5 610.5 L913.5 612.5 L913.5 605.5 L914.5 602.5 L914.5 578.5 L915.5 576.5 L915.5 572.5 L915.5 577.5 L916.5 580.5 L916.5 605.5 L917.5 607.5 L917.5 612.5 L917.5 608.5 L918.5 606.5 L918.5 581.5 L919.5 579.5 L919.5 572.5 L919.5 574.5 L920.5 576.5 L920.5 600.5 L921.5 603.5 L921.5 612.5 L921.5 611.5 L922.5 609.5 L922.5 586.5 L923.5 583.5 L923.5 572.5 L923.5 573.5 L924.5 574.5 L924.5 596.5 L925.5 599.5 L925.5 612.5 L926.5 611.5 L926.5 591.5 L927.5 588.5 L927.5 572.5 L928.5 572.5 L928.5 591.5 L929.5 594.5 L929.5 612.5 L930.5 612.5 L930.5 596.5 L931.5 593.5 L931.5 573.5 L932.5 572.5 L932.5 586.5 L933.5 589.5 L933.5 611.5 L934.5 611.5 L934.5 612.5 L934.5 601.5 L935.5 598.5 L935.5 575.5 L936.5 573.5 L936.5 572.5 L936.5 581.5 L937.5 584.5 L937.5 608.5 L938.5 610.5 L938.5 612.5 L938.5 605.5 L939.5 602.5 L939.5 578.5 L940.5 576.5 L940.5 572.5 L940.5 577.5 L941.5 580.5 L941.5 605.5 L942.5 607.5 L942.5 612.5 L942.5 608.5 L943.5 606.5 L943.5 581.5 L944.5 579.5 L944.5 572.5 L944.5 574.5 L945.5 576.5 L945.5 600.5 L946.5 603.5 L946.5 612.5 L946.5 611.5 L947.5 609.5 L947.5 586.5 L948.5 583.5 L948.5 572.5 L948.5 573.5 L949.5 574.5 L949.5 596.5 L950.5 599.5 L950.5 612.5 L951.5 611.5 L951.5 591.5 L952.5 588.5 L952.5 572.5 L953.5 572.5 L953.5 591.5 L954.5 594.5 L954.5 612.5 L955.5 612.5 L955.5 596.5 L956.5 593.5 L956.5 573.5 L957.5 572.5 L957.5 586.5 L958.5 589.5 L958.5 611.5 L959.5 611.5 L959.5 612.5 L959.5 601.5 L960.5 598.5 L960.5 575.5 L961.5 573.5 L961.5 572.5 L961.5 581.5 L962.5 584.5 L962.5 608.5 L963.5 610.5 L963.5 612.5 L963.5 605.5 L964.5 602.5 L964.5 578.5 L965.5 576.5 L965.5 572.5 L965.5 577.5 L966.5 580.5 L966.5 605.5 L967.5 607.5 L967.5 612.5 L967.5 608.5 L968.5 606.5 L968.5 581.5 L969.5 579.5 L969.5 572.5 L969.5 574.5 L970.5 576.5 L970.5 600.5 L971.5 603.5 L971.5 612.5 L971.5 611.5 L972.5 609.5 L972.5 586.5 L973.5 583.5 L973.5 572.5 L973.5 573.5 L974.5 574.5 L974.5 596.5 L975.5 599.5 L975.5 612.5 L976.5 611.5 L976.5 591.5 L977.5 588.5 L977.5 572.5 L978.5 572.5 L978.5 591.5 L979.5 594.5 L979.5 612.5 L980.5 612.5 L980.5 596.5 L981.5 593.5 L981.5 573.5 L982.5 572.5 L982.5 586.5 L983.5 589.5 L983.5 611.5 L984.5 611.5 L984.5 612.5 L984.5 601.5 L985.5 598.5 L985.5 575.5 L986.5 573.5 L986.5 572.5 L986.5 581.5 L987.5 584.5 L987.5 608.5 L988.5 610.5 L988.5 612.5 L988.5 605.5 L989.5 602.5 L989.5 578.5 L990.5 576.5 L990.5 572.5 L990.5 577.5 L991.5 580.5 L991.5 605.5 L992.5 607.5 L992.5 612.5 L992.5 608.5 L993.5 606.5 L993.5 581.5 L994.5 579.5 L994.5 572.5 L994.5 574.5 L995.5 576.5 L995.5 600.5 L996.5 603.5 L996.5 612.5 L996.5 611.5 L997.5 609.5 L997.5 586.5 L998.5 583.5 L998.5 572.5 L998.5 573.5 L999.5 574.5 L999.5 596.5 L1000.5 599.5 L1000.5 612.5 L1001.5 611.5 L1001.5 591.5 L1002.5 588.5 L1002.5 572.5 L1003.5 572.5 L1003.5 591.5 L1004.5 594.5 L1004.5 612.5 L1005.5 612.5 L1005.5 596.5 L1006.5 593.5 L1006.5 573.5 L1007.5 572.5 L1007.5 586.5 L1008.5 589.5 L1008.5 611.5 L1009.5 611.5 L1009.5 612.5 L1009.5 601.5 L1010.5 598.5 L1010.5 575.5 L1011.5 573.5 L1011.5 572.5 L1011.5 581.5 L1012.5 584.5 L1012.5 608.5 L1013.5 610.5 L1013.5 612.5 L1013.5 605.5 L1014.5 602.5 L1014.5 578.5 L1015.5 576.5 L1015.5 572.5 L1015.5 577.5 L1016.5 580.5 L1016.5 605.5 L1017.5 607.5 L1017.5 612.5 L1017.5 608.5 L1018.5 606.5 L1018.5 581.5 L1019.5 579.5 L1019.5 572.5 L1019.5 574.5 L1020.5 576.5 L1020.5 600.5 L1021.5 603.5 L1021.5 612.5 L1021.5 611.5 L1022.5 609.5 L1022.5 586.5 L1023.5 583.5 L1023.5 572.5 L1023.5 573.5 L1024.5 574.5 L1024.5 596.5 L1025.5 599.5 L1025.5 612.5 L1026.5 611.5 L1026.5 591.5 L1027.5 588.5 L1027.5 572.5 L1028.5 572.5 L1028.5 591.5 L1029.5 594.5 L1029.5 612.5 L1030.5 612.5 L1030.5 596.5 L1031.5 593.5 L1031.5 573.5 L1032.5 572.5 L1032.5 586.5 L1033.5 589.5 L1033.5 611.5 L1034.5 611.5 L1034.5 612.5 L1034.5 601.5 L1035.5 598.5 L1035.5 575.5 L1036.5 573.5 L1036.5 572.5 L1036.5 581.5 L1037.5 584.5 L1037.5 608.5 L1038.5 610.5 L1038.5 612.5 L1038.5 605.5 L1039.5 602.5 L1039.5 578.5 L1040.5 576.5 L1040.5 572.5 L1040.5 577.5 L1041.5 580.5 L1041.5 605.5 L1042.5 607.5 L1042.5 612.5 L1042.5 608.5 L1043.5 606.5 L1043.5 581.5 L1044.5 579.5 L1044.5 572.5 L1044.5 574.5 L1045.5 576.5 L1045.5 600.5 L1046.5 603.5 L1046.5 612.5 L1046.5 611.5 L1047.5 609.5 L1047.5 586.5 L1048.5 583.5 L1048.5 572.5 L1048.5 573.5 L1049.5 574.5 L1049.5 596.5 L1050.5 599.5 L1050.5 612.5 L1051.5 611.5 L1051.5 591.5 L1052.5 588.5 L1052.5 572.5 L1053.5 572.5 L1053.5 591.5 L1054.5 594.5 L1054.5 612.5 L1055.5 612.5 L1055.5 596.5 L1056.5 593.5 L1056.5 573.5 L1057.5 572.5 L1057.5 586.5 L1058.5 589.5 L1058.5 611.5 L1059.5 611.5 L1059.5 612.5 L1059.5 601.5 L1060.5 598.5 L1060.5 575.5 L1061.5 573.5 L1061.5 572.5 L1061.5 581.5 L1062.5 584.5 L1062.5 608.5 L1063.5 610.5 L1063.5 612.5 L1063.5 605.5 L1064.5 602.5 L1064.5 578.5 L1065.5 576.5 L1065.5 572.5 L1065.5 577.5 L1066.5 580.5 L1066.5 605.5 L1067.5 607.5 L1067.5 612.5 L1067.5 608.5 L1068.5 606.5 L1068.5 581.5 L1069.5 579.5 L1069.5 572.5 L1069.5 574.5 L1070.5 576.5 L1070.5 600.5 L1071.5 603.5 L1071.5 612.5 L1071.5 611.5 L1072.5 609.5 L1072.5 586.5 L1073.5 583.5 L1073.5 572.5 L1073.5 573.5 L1074.5 574.5 L1074.5 596.5 L1075.5 599.5 L1075.5 612.5 L1076.5 611.5 L1076.5 591.5 L1077.5 588.5 L1077.5 572.5 L1078.5 572.5 L1078.5 591.5 L1079.5 594.5 L1079.5 612.5 L1080.5 612.5 L1080.5 596.5 L1081.5 593.5 L1081.5 573.5 L1082.5 572.5 L1082.5 586.5 L1083.5 589.5 L1083.5 611.5 L1084.5 611.5 L1084.5 612.5 L1084.5 601.5 L1085.5 598.5 L1085.5 575.5 L1086.5 573.5 L1086.5 572.5 L1086.5 581.5 L1087.5 584.5 L1087.5 608.5 L1088.5 610.5 L1088.5 612.5 L1088.5 605.5 L1089.5 602.5 L1089.5 578.5 L1090.5 576.5 L1090.5 572.5 L1090.5 577.5 L1091.5 580.5 L1091.5 605.5 L1092.5 607.5 L1092.5 612.5 L1092.5 608.5 L1093.5 606.5 L1093.5 581.5 L1094.5 579.5 L1094.5 572.5 L1094.5 574.5 L1095.5 576.5 L1095.5 600.5 L1096.5 603.5 L1096.5 612.5 L1096.5 611.5 L1097.5 609.5 L1097.5 586.5 L1098.5 583.5 L1098.5 572.5 L1098.5 573.5 L1099.5 574.5 L1099.5 596.5 L1100.5 599.5 L1100.5 612.5 L1101.5 611.5 L1101.5 591.5 L1102.5 588.5 L1102.5 572.5 L1103.5 572.5 L1103.5 591.5 L1104.5 594.5 L1104.5 612.5 L1105.5 612.5 L1105.5 596.5 L1106.5 593.5 L1106.5 573.5 L1107.5 572.5 L1107.5 586.5 L1108.5 589.5 L1108.5 611.5 L1109.5 611.5 L1109.5 612.5 L1109.5 601.5 L1110.5 598.5 L1110.5 575.5 L1111.5 573.5 L1111.5 572.5 L1111.5 581.5 L1112.5 584.5 L1112.5 608.5 L1113.5 610.5 L1113.5 612.5 L1113.5 605.5 L1114.5 602.5 L1114.5 578.5 L1115.5 576.5 L1115.5 572.5 L1115.5 577.5 L1116.5 580.5 L1116.5 605.5 L1117.5 607.5 L1117.5 612.5 L1117.5 608.5 L1118.5 606.5 L1118.5 581.5 L1119.5 579.5 L1119.5 572.5 L1119.5 574.5 L1120.5 576.5 L1120.5 600.5 L1121.5 603.5 L1121.5 612.5 L1121.5 611.5 L1122.5 609.5 L1122.5 586.5 L1123.5 583.5 L1123.5 572.5 L1123.5 573.5 L1124.5 574.5 L1124.5 596.5 L1125.5 599.5 L1125.5 612.5 L1126.5 611.5 L1126.5 591.5 L1127.5 588.5 L1127.5 572.5 L1128.5 572.5 L1128.5 591.5 L1129.5 594.5 L1129.5 612.5 L1130.5 612.5 L1130.5 596.5 L1131.5 593.5 L1131.5 573.5 L1132.5 572.5 L1132.5 586.5 L1133.5 589.5 L1133.5 611.5 L1134.5 611.5 L1134.5 612.5 L1134.5 601.5 L1135.5 598.5 L1135.5 575.5 L1136.5 573.5 L1136.5 572.5 L1136.5 581.5 L1137.5 584.5 L1137.5 608.5 L1138.5 610.5 L1138.5 612.5 L1138.5 605.5 L1139.5 602.5 L1139.5 578.5 L1140.5 576.5 L1140.5 572.5 L1140.5 577.5 L1141.5 580.5 L1141.5 605.5 L1142.5 607.5 L1142.5 612.5 L1142.5 608.5 L1143.5 606.5 L1143.5 581.5 L1144.5 579.5 L1144.5 572.5 L1144.5 574.5 L1145.5 576.5 L1145.5 600.5 L1146.5 603.5 L1146.5 612.5 L1146.5 611.5 L1147.5 609.5 L1147.5 586.5 L1148.5 583.5 L1148.5 572.5 L1148.5 573.5 L1149.5 574.5 L1149.5 596.5 L1150.5 599.5 L1150.5 612.5 L1151.5 611.5 L1151.5 591.5 L1152.5 588.5 L1152.5 572.5 L1153.5 572.5 L1153.5 591.5 L1154.5 594.5 L1154.5 612.5 L1155.5 612.5 L1155.5 596.5 L1156.5 593.5 L1156.5 573.5 L1157.5 572.5 L1157.5 586.5 L1158.5 589.5 L1158.5 611.5 L1159.5 611.5 L1159.5 612.5 L1159.5 601.5 L1160.5 598.5 L1160.5 575.5 L1161.5 573.5 L1161.5 572.5 L1161.5 581.5 L1162.5 584.5 L1162.5 608.5 L1163.5 610.5 L1163.5 612.5 L1163.5 605.5 L1164.5 602.5 L1164.5 578.5 L1165.5 576.5 L1165.5 572.5 L1165.5 577.5 L1166.5 580.5 L1166.5 605.5 L1167.5 607.5 L1167.5 612.5 L1167.5 608.5 L1168.5 606.5 L1168.5 581.5 L1169.5 579.5 L1169.5 572.5 L1169.5 574.5 L1170.5 576.5 L1170.5 600.5 L1171.5 603.5 L1171.5 612.5 L1171.5 611.5 L1172.5 609.5 L1172.5 586.5 L1173.5 583.5 L1173.5 572.5 L1173.5 573.5 L1174.5 574.5 L1174.5 596.5 L1175.5 599.5 L1175.5 612.5 L1176.5 611.5 L1176.5 591.5 L1177.5 588.5 L1177.5 572.5 L1178.5 572.5 L1178.5 591.5 L1179.5 594.5 L1179.5 612.5 L1180.5 612.5 L1180.5 596.5 L1181.5 593.5 L1181.5 573.5 L1182.5 572.5 L1182.5 586.5 L1183.5 589.5 L1183.5 611.5 L1184.5 611.5 L1184.5 612.5 L1184.5 601.5 L1185.5 598.5 L1185.5 575.5 L1186.5 573.5 L1186.5 572.5 L1186.5 581.5 L1187.5 584.5 L1187.5 608.5 L1188.5 610.5 L1188.5 612.5 L1188.5 605.5 L1189.5 602.5 L1189.5 578.5 L1190.5 576.5 L1190.5 572.5 L1190.5 577.5 L1191.5 580.5 L1191.5 605.5 L1192.5 607.5 L1192.5 612.5 L1192.5 608.5 L1193.5 606.5 L1193.5 581.5 L1194.5 579.5 L1194.5 572.5 L1194.5 574.5 L1195.5 576.5 L1195.5 600.5 L1196.5 603.5 L1196.5 612.5 L1196.5 611.5 L1197.5 609.5 L1197.5 586.5 L1198.5 583.5 L1198.5 572.5 L1198.5 573.5 L1199.5 574.5 L1199.5 596.5 L1200.5 599.5 L1200.5 612.5 L1201.5 611.5 L1201.5 591.5 L1202.5 588.5 L1202.5 572.5 L1203.5 572.5 L1203.5 591.5 L1204.5 594.5 L1204.5 612.5 L1205.5 612.5 L1205.5 596.5 L1206.5 593.5 L1206.5 573.5 L1207.5 572.5 L1207.5 586.5 L1208.5 589.5 L1208.5 611.5 L1209.5 611.5 L1209.5 612.5 L1209.5 601.5 L1210.5 598.5 L1210.5 575.5 L1211.5 573.5 L1211.5 572.5 L1211.5 581.5 L1212.5 584.5 L1212.5 608.5 L1213.5 610.5 L1213.5 612.5 L1213.5 605.5 L1214.5 602.5 L1214.5 578.5 L1215.5 576.5 L1215.5 572.5 L1215.5 577.5 L1216.5 580.5 L1216.5 605.5 L1217.5 607.5 L1217.5 612.5 L1217.5 608.5 L1218.5 606.5 L1218.5 581.5 L1219.5 579.5 L1219.5 572.5 L1219.5 574.5 L1220.5 576.5 L1220.5 600.5 L1221.5 603.5 L1221.5 612.5 L1221.5 611.5 L1222.5 609.5 L1222.5 586.5 L1223.5 583.5 L1223.5 572.5 L1223.5 573.5 L1224.5 574.5 L1224.5 596.5 L1225.5 599.5 L1225.5 612.5 L1226.5 611.5 L1226.5 591.5 L1227.5 588.5 L1227.5 572.5 L1228.5 572.5 L1228.5 591.5 L1229.5 594.5 L1229.5 612.5 L1230.5 612.5 L1230.5 596.5 L1231.5 593.5 L1231.5 573.5 L1232.5 572.5 L1232.5 586.5 L1233.5 589.5 L1233.5 611.5 L1234.5 611.5 L1234.5 612.5 L1234.5 601.5 L1235.5 598.5 L1235.5 575.5 L1236.5 573.5 L1236.5 572.5 L1236.5 581.5 L1237.5 584.5 L1237.5 608.5 L1238.5 610.5 L1238.5 612.5 L1238.5 605.5 L1239.5 602.5 L1239.5 578.5 L1240.5 576.5 L1240.5 572.5 L1240.5 577.5 L1241.5 580.5 L1241.5 605.5 L1242.5 607.5 L1242.5 612.5 L1242.5 608.5 L1243.5 606.5 L1243.5 581.5 L1244.5 579.5 L1244.5 572.5 L1244.5 574.5 L1245.5 576.5 L1245.5 600.5 L1246.5 603.5 L1246.5 612.5 L1246.5 611.5 L1247.5 609.5 L1247.5 586.5 L1248.5 583.5 L1248.5 572.5 L1248.5 573.5 L1249.5 574.5 L1249.5 596.5 L1250.5 599.5 L1250.5 612.5 L1251.5 611.5 L1251.5 591.5 L1252.5 588.5 L1252.5 572.5 L1253.5 572.5 L1253.5 591.5 L1254.5 594.5 L1254.5 612.5 L1255.5 612.5 L1255.5 596.5 L1256.5 593.5 L1256.5 573.5 L1257.5 572.5 L1257.5 586.5 L1258.5 589.5 L1258.5 611.5 L1259.5 611.5 L1259.5 612.5 L1259.5 601.5 L1260.5 598.5 L1260.5 575.5 L1261.5 573.5 L1261.5 572.5 L1261.5 581.5 L1262.5 584.5 L1262.5 608.5 L1263.5 610.5 L1263.5 612.5 L1263.5 605.5 L1264.5 602.5 L1264.5 578.5 L1265.5 576.5 L1265.5 572.5 L1265.5 577.5 L1266.5 580.5 L1266.5 605.5 L1267.5 607.5 L1267.5 612.5 L1267.5 608.5 L1268.5 606.5 L1268.5 581.5 L1269.5 579.5 L1269.5 572.5 L1269.5 574.5 L1270.5 576.5 L1270.5 600.5 L1271.5 603.5 L1271.5 612.5 L1271.5 611.5 L1272.5 609.5 L1272.5 586.5 L1273.5 583.5 L1273.5 572.5 L1273.5 573.5 L1274.5 574.5 L1274.5 596.5 L1275.5 599.5 L1275.5 612.5 L1276.5 611.5 L1276.5 591.5 L1277.5 588.5 L1277.5 572.5 L1278.5 572.5 L1278.5 591.5 L1279.5 594.5 L1279.5 612.5 L1280.5 612.5 L1280.5 596.5 L1281.5 593.5 L1281.5 573.5 L1282.5 572.5 L1282.5 586.5 L1283.5 589.5 L1283.5 611.5 L1284.5 611.5 L1284.5 612.5 L1284.5 601.5 L1285.5 598.5 L1285.5 575.5 L1286.5 573.5 L1286.5 572.5 L1286.5 581.5 L1287.5 584.5 L1287.5 608.5 L1288.5 610.5 L1288.5 612.5 L1288.5 605.5 L1289.5 602.5 L1289.5 578.5 L1290.5 576.5 L1290.5 572.5 L1290.5 577.5 L1291.5 580.5 L1291.5 605.5 L1292.5 607.5 L1292.5 612.5 L1292.5 608.5 L1293.5 606.5 L1293.5 581.5 L1294.5 579.5 L1294.5 572.5 L1294.5 574.5 L1295.5 576.5 L1295.5 600.5 L1296.5 603.5 L1296.5 612.5 L1296.5 611.5 L1297.5 609.5 L1297.5 586.5 L1298.5 583.5 L1298.5 572.5 L1298.5 573.5 L1299.5 574.5 L1299.5 596.5 L1300.5 599.5 L1300.5 612.5 L1301.5 611.5 L1301.5 591.5 L1302.5 588.5 L1302.5 572.5 L1303.5 572.5 L1303.5 591.5 L1304.5 594.5 L1304.5 612.5 L1305.5 612.5 L1305.5 596.5 L1306.5 593.5 L1306.5 573.5 L1307.5 572.5 L1307.5 586.5 L1308.5 589.5 L1308.5 611.5 L1309.5 611.5 L1309.5 612.5 L1309.5 601.5 L1310.5 598.5 L1310.5 575.5 L1311.5 573.5 L1311.5 572.5 L1311.5 581.5 L1312.5 584.5 L1312.5 608.5 L1313.5 610.5 L1313.5 612.5 L1313.5 605.5 L1314.5 602.5 L1314.5 578.5 L1315.5 576.5 L1315.5 572.5 L1315.5 577.5 L1316.5 580.5 L1316.5 605.5 L1317.5 607.5 L1317.5 612.5 L1317.5 608.5 L1318.5 606.5 L1318.5 581.5 L1319.5 579.5 L1319.5 572.5 L1319.5 574.5 L1320.5 576.5 L1320.5 600.5 L1321.5 603.5 L1321.5 612.5 L1321.5 611.5 L1322.5 609.5 L1322.5 586.5 L1323.5 583.5 L1323.5 572.5 L1323.5 573.5 L1324.5 574.5 L1324.5 596.5 L1325.5 599.5 L1325.5 612.5 L1326.5 611.5 L1326.5 591.5 L1327.5 588.5" stroke="#00c800" stroke-linejoin="round"/><path d="M495.5 98V696" stroke="#ff8000" stroke-dasharray="4 2 1 2"/><path d="M516.5 98V696" stroke="#ff00ff" stroke-dasharray="4 2"/></svg>
<div class="a" style="left:1347px;top:72px;width:17px;height:636px;background:#f7f7f7"></div>
<div class="a" style="left:1364px;top:72px;width:1px;height:636px;background:#fff"></div>
<div class="a" style="left:1347px;top:73px;width:17px;height:17px;background:#f0f0f0;border:1px solid;border-color:#e3e3e3 #696969 #696969 #e3e3e3;box-shadow:inset -1px -1px 0 #a0a0a0, inset 1px 1px 0 #fff"></div>
<div class="a" style="left:1347px;top:91px;width:17px;height:35px;background:#f0f0f0;border:1px solid;border-color:#e3e3e3 #696969 #696969 #e3e3e3;box-shadow:inset -1px -1px 0 #a0a0a0, inset 1px 1px 0 #fff"></div>
<div class="a" style="left:1347px;top:691px;width:17px;height:17px;background:#f0f0f0;border:1px solid;border-color:#e3e3e3 #696969 #696969 #e3e3e3;box-shadow:inset -1px -1px 0 #a0a0a0, inset 1px 1px 0 #fff"></div>
<svg class="a" style="left:1351px;top:79px" width="9" height="5" viewBox="0 0 9 5"><path d="M0 4.5 L4 0.3 L8 4.5 Z" fill="#000"/></svg>
<svg class="a" style="left:1351px;top:697px" width="9" height="5" viewBox="0 0 9 5"><path d="M0 0.5 L8 0.5 L4 4.7 Z" fill="#000"/></svg>
<div class="a" style="left:0;top:708px;width:1365px;height:3px;background:#fdfdfd"></div>
<div class="a" style="left:0;top:711px;width:1365px;height:23px;background:#f0f0f0"></div>
<div class="ui" style="left:32px;top:717px;">波形</div>
<div class="a" style="left:65px;top:712px;width:64px;height:23px;background:#f4f4f4;border:2px solid #646464;border-right-width:1px;border-radius:3px 3px 3px 3px;box-shadow:1px 0 0 #a0a0a0, inset 1px 1px 0 #d8d8d8"></div>
<div class="ui" style="left:96px;top:718px;">配置</div>
<div class="a" style="left:132px;top:713px;width:1px;height:20px;background:#a0a0a0"></div>
<div class="a" style="left:133px;top:713px;width:1px;height:20px;background:#fff"></div>
<div class="a" style="left:319px;top:713px;width:1px;height:20px;background:#a0a0a0"></div>
<div class="a" style="left:320px;top:713px;width:1px;height:20px;background:#fff"></div>
<div class="a" style="left:505px;top:713px;width:1px;height:20px;background:#a0a0a0"></div>
<div class="a" style="left:506px;top:713px;width:1px;height:20px;background:#fff"></div>
<div class="a" style="left:590px;top:713px;width:1px;height:20px;background:#a0a0a0"></div>
<div class="a" style="left:591px;top:713px;width:1px;height:20px;background:#fff"></div>
<div class="t" style="left:135px;top:720px;color:#000;"><b style="width:180px">T1[2014-02-03 07:02:40.011600]</b></div>
<div class="t" style="left:321px;top:720px;color:#000;"><b style="width:180px">T2[2014-02-03 07:02:40.001800]</b></div>
<div class="t" style="left:507px;top:720px;color:#000;"><b style="width:78px">Td[0:00.0098]</b></div>
<div class="a" style="left:594px;top:713px;width:747px;height:21px;border:1px solid;border-color:#a0a0a0 #fff #fff #a0a0a0;background:#f0f0f0"></div>
<svg class="a" style="left:1344px;top:716px" width="16" height="16" viewBox="0 0 16 16"><defs><linearGradient id="rg" x1="0.2" y1="0" x2="0.6" y2="1"><stop offset="0" stop-color="#ff9a7c"/><stop offset="1" stop-color="#fc3410"/></linearGradient></defs><path d="M5.2 1.6 H10.8 L14.4 5.2 V10.8 L10.8 14.4 H5.2 L1.6 10.8 V5.2 Z" fill="url(#rg)" stroke="#f4a4a0" stroke-width="1.2"/></svg>
<svg class="a" style="left:8px;top:715px" width="17" height="17" viewBox="0 0 17 17" fill="none"><path d="M1.6 1V14.4H15.4" stroke="#3474d4" stroke-width="1.2"/><path d="M3 10 C4.4 4,7.6 1.6,10 3 S13.6 8,14.6 11.6" stroke="#f02828" stroke-width="1.3"/><path d="M3 3.4 C4.6 7.6,6.6 8.6,8.4 7 S11.6 3.6,13.6 5" stroke="#3068e0" stroke-width="1.2"/><path d="M3 12.6 C5 12.4,6.6 9.4,8.6 9.6 S12 13,14.4 13" stroke="#30a040" stroke-width="1.3"/></svg>
<svg class="a" style="left:71px;top:714px" width="19" height="19" viewBox="0 0 19 19" fill="none"><g transform="translate(8.6,8.8)"><rect x="-1.5" y="-7.4" width="3" height="3.2" rx="0.6" transform="rotate(0)" fill="#b8b8b8"/><rect x="-1.5" y="-7.4" width="3" height="3.2" rx="0.6" transform="rotate(45)" fill="#b8b8b8"/><rect x="-1.5" y="-7.4" width="3" height="3.2" rx="0.6" transform="rotate(90)" fill="#b8b8b8"/><rect x="-1.5" y="-7.4" width="3" height="3.2" rx="0.6" transform="rotate(135)" fill="#b8b8b8"/><rect x="-1.5" y="-7.4" width="3" height="3.2" rx="0.6" transform="rotate(180)" fill="#b8b8b8"/><rect x="-1.5" y="-7.4" width="3" height="3.2" rx="0.6" transform="rotate(225)" fill="#b8b8b8"/><rect x="-1.5" y="-7.4" width="3" height="3.2" rx="0.6" transform="rotate(270)" fill="#b8b8b8"/><rect x="-1.5" y="-7.4" width="3" height="3.2" rx="0.6" transform="rotate(315)" fill="#b8b8b8"/><circle r="5" fill="#c4c4c4"/><circle r="4.2" fill="#dcdcdc"/><circle r="2" fill="#f4f4f4" stroke="#a8a8a8" stroke-width="0.6"/></g><path d="M7.4 16.4 L16 7.2" stroke="#b87820" stroke-width="3.6" stroke-linecap="round"/><path d="M7.6 16.2 L15.8 7.4" stroke="#f8c838" stroke-width="2.2" stroke-linecap="round"/><path d="M8.4 16.6 L16.4 8" stroke="#f8e890" stroke-width="0.7"/><path d="M5.8 18 L6.4 15.4 L8.4 17.2 Z" fill="#f0d8b0" stroke="#806020" stroke-width="0.4"/></svg>
<div class="a" style="left:22px;top:732.6px;width:10px;height:4px;border-radius:5px 5px 0 0;background:#203860"></div>
<div class="a" style="left:2px;top:711px;width:1px;height:23px;background:#a0a0a0"></div>
</body></html>
